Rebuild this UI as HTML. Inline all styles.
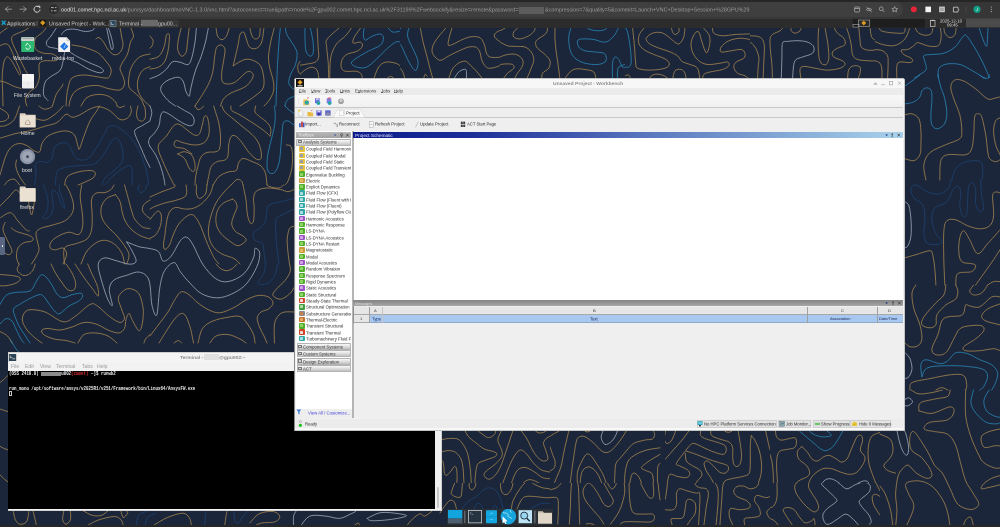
<!DOCTYPE html>
<html><head><meta charset="utf-8">
<style>
*{margin:0;padding:0;box-sizing:border-box}
html,body{width:1000px;height:527px;overflow:hidden;background:#1c263a;font-family:"Liberation Sans",sans-serif}
.a{position:absolute}
.t{position:absolute;white-space:nowrap;line-height:1;will-change:transform}
.ic{position:absolute}
u{text-decoration-thickness:0.35px;text-underline-offset:0.3px}
</style></head><body>
<!-- ============ browser chrome ============ -->
<div class="a" style="left:0;top:0;width:1000px;height:18px;background:#363636"></div>
<div class="a" style="left:0;top:0;width:1000px;height:1.5px;background:#262626"></div>
<div class="a" style="left:48px;top:2px;width:855px;height:14.5px;border-radius:7.5px;background:#3f3f3f"></div>
<svg class="a" style="left:0;top:0" width="1000" height="18">
  <g stroke="#9a9a9a" stroke-width="0.9" fill="none" stroke-linecap="round">
    <path d="M5.5 9.2h6M5.5 9.2l2.6-2.6M5.5 9.2l2.6 2.6"/>
    <path d="M20 9.2h6M26 9.2l-2.6-2.6M26 9.2l-2.6 2.6"/>
  </g>
  <g stroke="#d8d8d8" stroke-width="1" fill="none">
    <path d="M39.3 7.3A3 3 0 1 0 40 9.5"/>
    <path d="M38.2 6.2h1.6v1.6" stroke-linecap="round"/>
  </g>
  <circle cx="53.6" cy="9.2" r="5" fill="#2c2c2c"/>
  <g stroke="#d0d0d0" stroke-width="0.8">
    <path d="M51 7.6h2.8M55 7.6h1.5M51 10.8h1.5M53.8 10.8h2.8"/>
  </g>
  <!-- right icons -->
  <g stroke="#b4b4b4" stroke-width="0.7" fill="none">
    <rect x="854.6" y="7" width="5" height="5" rx="0.7"/>
    <path d="M854.6 8.5h5"/>
    <path d="M866.3 9.5c1.2-1.6 3.8-1.6 5.4 0c-1.6 1.6-4.2 1.6-5.4 0z M866.5 7.2l5.2 4.8"/>
    <circle cx="881.2" cy="8.8" r="1.9"/><path d="M882.6 10.2l1.9 1.9"/>
    <path d="M894.7 6.6l0.85 1.8 1.95 0.2-1.45 1.3 0.45 1.95-1.8-1.05-1.8 1.05 0.45-1.95-1.45-1.3 1.95-0.2z"/>
  </g>
  <path d="M912.6 6.4h2.4l1.7 1.7v2.4l-1.7 1.7h-2.4l-1.7-1.7v-2.4z" fill="#e4253a"/>
  <rect x="925.4" y="6.6" width="5.6" height="5.6" fill="#f4f4f4"/>
  <rect x="939.2" y="6.6" width="5.6" height="5.6" fill="#d4d4d4"/><rect x="940.2" y="7.6" width="3.6" height="3.6" fill="#a0a0a0"/>
  <path d="M953.4 7.2h4.6v1.6a0.8 0.8 0 0 1 0 1.6v1.6h-4.6z" fill="none" stroke="#cfcfcf" stroke-width="0.8"/>
  <rect x="965.8" y="5.6" width="0.5" height="7.5" fill="#555"/>
  <circle cx="977" cy="9.3" r="3.6" fill="#0f9b81"/>
  <path d="M977.6 7.6v2.4a0.9 0.9 0 0 1-1.7 0.3" stroke="#fff" stroke-width="0.55" fill="none"/>
  <g fill="#cfcfcf"><circle cx="991.3" cy="7" r="0.55"/><circle cx="991.3" cy="9.3" r="0.55"/><circle cx="991.3" cy="11.6" r="0.55"/></g>
</svg>
<div class="t" style="left:60.8px;top:7.2px;font-size:10.96px;color:#9c9c9c;transform:scale(0.5);transform-origin:0 0"><span style="color:#e6e6e6">ood01.comet.hpc.ncl.ac.uk</span>/pun/sys/dashboard/noVNC-1.3.0/vnc.html?autoconnect=true&amp;path=rnode%2Fgpu002.comet.hpc.ncl.ac.uk%2F31199%2Fwebsockify&amp;resize=remote&amp;password=</div>
<div class="a" style="left:518.8px;top:6.5px;width:25.7px;height:7px;background:#5c5c5c;filter:blur(0.6px)"></div>
<div class="t" style="left:544.5px;top:7.2px;font-size:10.84px;color:#9c9c9c;transform:scale(0.5);transform-origin:0 0">&amp;compression=7&amp;quality=5&amp;commit=Launch+VNC+Desktop+Session+%28GPU%29</div>

<!-- ============ XFCE panel ============ -->
<div class="a" style="left:0;top:18px;width:1000px;height:10px;background:#2c2c2c"></div>
<div class="a" style="left:0;top:17.5px;width:1000px;height:0.8px;background:#3a3a3a"></div>
<svg class="a" style="left:0;top:18px" width="1000" height="10" viewBox="0 18 1000 10">
  <g stroke="#1aa3d8" stroke-width="1.4"><path d="M1.8 20.6l3.8 4.2M5.6 20.6l-3.8 4.2"/></g>
  <rect x="36.6" y="21" width="0.7" height="4.5" fill="#777"/>
  <rect x="108.5" y="19.4" width="70.5" height="7.8" rx="1.5" fill="#363636"/>
  <rect x="39.5" y="19.6" width="6.5" height="6.6" fill="#1a1a1a"/>
  <path d="M42.7 20.3l2.6 2.5-2.6 2.6-2.6-2.6z" fill="#d89a20"/>
  <rect x="110" y="20.5" width="6" height="6" fill="#2f4a5e" stroke="#8aa0b0" stroke-width="0.5"/>
  <path d="M111.3 22v2.6h2.5" stroke="#e0e0e0" stroke-width="0.6" fill="none"/>
  <rect x="141" y="19.8" width="17" height="6.5" fill="#6a6a6a" filter="url(#bl)"/>
  <rect x="852.8" y="18.8" width="72" height="8.8" fill="#1e1e1e"/>
  <rect x="858.3" y="20" width="11.5" height="6.4" fill="#2a2a2a" stroke="#c8c8c8" stroke-width="0.5"/>
  <path d="M863.8 20.4l2.4 2.6-2.4 2.6-2.4-2.6z" fill="#d89a20"/>
  <rect x="853" y="24.5" width="6" height="2.6" fill="none" stroke="#c0c0c0" stroke-width="0.5"/>
  <rect x="930.5" y="20.5" width="4.5" height="6" fill="none" stroke="#d0d0d0" stroke-width="0.7"/>
  <rect x="931.8" y="19.8" width="2" height="1.2" fill="#d0d0d0"/>
  <rect x="966" y="18.6" width="34" height="8.6" fill="#4c4c4c" filter="url(#bl)"/>
  <defs><filter id="bl"><feGaussianBlur stdDeviation="0.7"/></filter></defs>
</svg>
<div class="t" style="left:7.3px;top:20.6px;font-size:10.60px;color:#d8d8d8;transform:scale(0.5);transform-origin:0 0">Applications</div>
<div class="t" style="left:48.5px;top:20.6px;font-size:10.60px;color:#d0d0d0;transform:scale(0.5);transform-origin:0 0">Unsaved Project - Work...</div>
<div class="t" style="left:119px;top:20.6px;font-size:10.60px;color:#d0d0d0;transform:scale(0.5);transform-origin:0 0">Terminal -</div>
<div class="t" style="left:158px;top:20.6px;font-size:10.60px;color:#d0d0d0;transform:scale(0.5);transform-origin:0 0">gpu00...</div>
<div class="t" style="left:940px;top:19.4px;font-size:8.60px;color:#e0e0e0;transform:scale(0.5);transform-origin:0 0">2025-12-10</div>
<div class="t" style="left:946.5px;top:23.2px;font-size:8.60px;color:#e0e0e0;transform:scale(0.5);transform-origin:0 0">09:45</div>

<!-- ============ wallpaper ============ -->
<svg class="a" id="wall" style="left:0;top:28px" width="1000" height="499" viewBox="0 28 1000 499"><defs><clipPath id="wc0"><rect x="430.0" y="428.0" width="120.0" height="55.0"/></clipPath><clipPath id="wc1"><rect x="550.0" y="428.0" width="115.0" height="55.0"/></clipPath><clipPath id="wc2"><rect x="430.0" y="483.0" width="120.0" height="44.0"/></clipPath><clipPath id="wc3"><rect x="550.0" y="483.0" width="115.0" height="44.0"/></clipPath><clipPath id="wc4"><rect x="665.0" y="428.0" width="105.0" height="55.0"/></clipPath><clipPath id="wc5"><rect x="770.0" y="428.0" width="110.0" height="55.0"/></clipPath><clipPath id="wc6"><rect x="665.0" y="483.0" width="105.0" height="44.0"/></clipPath><clipPath id="wc7"><rect x="770.0" y="483.0" width="110.0" height="44.0"/></clipPath><clipPath id="wc8"><rect x="300.0" y="27.0" width="100.0" height="53.0"/></clipPath><clipPath id="wc9"><rect x="400.0" y="27.0" width="100.0" height="53.0"/></clipPath><clipPath id="wc10"><rect x="500.0" y="27.0" width="125.0" height="53.0"/></clipPath><clipPath id="wc11"><rect x="625.0" y="27.0" width="125.0" height="53.0"/></clipPath><clipPath id="wc12"><rect x="750.0" y="27.0" width="125.0" height="53.0"/></clipPath><clipPath id="wc13"><rect x="875.0" y="27.0" width="125.0" height="51.0"/></clipPath></defs><g fill="none" stroke-width="0.75" stroke-linecap="round" stroke-linejoin="round"><path d="M0.0 33.3C0.6 32.8 2.2 31.3 3.7 30.3C5.2 29.2 8.1 27.5 9.0 27.0M30.0 27.0C29.0 27.6 26.5 29.5 24.0 30.7C21.5 32.0 17.0 33.4 15.0 34.5C12.9 35.6 12.1 36.0 11.7 37.5C11.3 39.0 11.8 40.9 12.7 43.5C13.7 46.1 15.7 50.0 17.2 53.2C18.7 56.5 20.4 60.1 21.7 63.0C23.1 65.9 24.5 68.6 25.5 70.5C26.5 72.4 27.4 73.6 27.7 74.2M0.0 45.7C0.9 45.4 3.7 43.8 5.2 43.8C6.7 43.8 7.7 44.2 9.0 45.7C10.2 47.3 11.5 50.5 12.7 53.2C14.0 56.0 15.4 59.6 16.5 62.2C17.6 64.9 18.7 67.0 19.5 69.0C20.2 71.0 20.7 73.4 21.0 74.2M3.0 106.0C2.9 103.9 2.8 97.9 2.7 93.0C2.6 88.1 2.1 81.5 2.2 76.5C2.4 71.5 3.0 66.2 3.7 63.0C4.5 59.7 5.6 57.6 6.7 57.0C7.9 56.4 9.1 57.6 10.5 59.2C11.9 60.9 13.5 64.1 15.0 66.7C16.5 69.4 18.7 73.6 19.5 75.0M0.0 81.0C1.0 81.2 3.7 81.6 6.0 82.5C8.2 83.4 11.0 85.2 13.5 86.2C16.0 87.2 19.7 88.1 21.0 88.5M46.5 27.0C45.9 27.9 44.5 30.5 42.7 32.2C41.0 34.0 37.4 35.6 36.0 37.5C34.6 39.4 34.5 41.5 34.5 43.5C34.5 45.5 34.5 47.9 36.0 49.5C37.5 51.1 40.7 52.5 43.5 53.2C46.2 54.0 50.1 53.2 52.5 54.0C54.9 54.7 57.2 56.6 57.7 57.7C58.2 58.9 57.6 60.2 55.5 60.7C53.4 61.2 47.6 60.4 45.0 60.7C42.4 61.1 40.7 61.4 39.7 63.0C38.7 64.6 39.1 68.0 39.0 70.5C38.9 73.0 39.8 75.2 39.3 78.0C38.8 80.7 37.5 84.7 36.0 87.0C34.4 89.2 31.7 89.5 30.0 91.5C28.2 93.5 26.0 96.6 25.5 99.0C25.0 101.4 26.7 104.9 27.0 106.0M72.0 45.0C74.0 45.4 79.7 46.0 84.0 47.2C88.2 48.5 94.0 50.4 97.5 52.5C101.0 54.6 102.7 57.2 105.0 60.0C107.2 62.7 110.2 66.2 111.0 69.0C111.7 71.7 110.5 75.0 109.5 76.5C108.5 78.0 109.2 78.2 105.0 78.0C100.7 77.7 89.5 75.0 84.0 75.0C78.5 75.0 74.6 76.0 72.0 78.0C69.4 80.0 69.1 84.0 68.2 87.0C67.4 90.0 67.1 92.8 66.7 96.0C66.4 99.2 66.1 104.4 66.0 106.0M96.0 39.0C96.5 38.7 97.7 37.0 99.0 37.5C100.2 38.0 102.0 40.0 103.5 42.0C105.0 44.0 106.2 47.4 108.0 49.5C109.7 51.6 112.0 54.2 114.0 54.7C116.0 55.2 118.5 54.1 120.0 52.5C121.5 50.9 122.7 47.7 123.0 45.0C123.2 42.2 122.0 39.0 121.5 36.0C121.0 33.0 120.2 28.5 120.0 27.0M130.5 27.0C131.0 28.5 133.5 33.5 133.5 36.0C133.5 38.5 131.5 39.0 130.5 42.0C129.5 45.0 128.9 50.5 127.5 54.0C126.1 57.5 123.5 60.5 122.2 63.0C121.0 65.5 119.9 66.7 120.0 69.0C120.1 71.2 122.2 74.0 123.0 76.5C123.7 79.0 125.0 81.7 124.5 84.0C124.0 86.2 122.7 89.2 120.0 90.0C117.2 90.7 111.7 89.2 108.0 88.5C104.2 87.7 101.5 85.7 97.5 85.5C93.5 85.2 87.7 86.0 84.0 87.0C80.2 88.0 77.2 89.5 75.0 91.5C72.7 93.5 71.5 96.6 70.5 99.0C69.5 101.4 69.2 104.9 69.0 106.0M150.0 54.0C148.2 54.5 142.5 55.0 139.5 57.0C136.5 59.0 133.7 62.7 132.0 66.0C130.2 69.2 129.5 73.0 129.0 76.5C128.5 80.0 128.0 84.2 129.0 87.0C130.0 89.7 133.0 91.0 135.0 93.0C137.0 95.0 139.5 96.8 141.0 99.0C142.5 101.2 143.5 104.9 144.0 106.0M150.0 66.7C148.7 67.4 144.5 68.4 142.5 70.5C140.5 72.6 138.7 76.2 138.0 79.5C137.2 82.7 137.2 86.7 138.0 90.0C138.7 93.2 140.5 96.3 142.5 99.0C144.5 101.7 148.7 104.9 150.0 106.0M52.5 106.0C53.1 104.1 54.7 97.7 56.2 94.5C57.7 91.3 60.4 88.7 61.5 87.0C62.6 85.2 62.7 84.5 63.0 84.0M81.0 106.0C82.0 104.6 84.2 99.4 87.0 97.5C89.7 95.6 94.0 94.7 97.5 94.5C101.0 94.2 105.0 94.7 108.0 96.0C111.0 97.2 114.0 100.3 115.5 102.0C117.0 103.7 116.7 105.4 117.0 106.0M150.0 36.0C150.5 36.7 152.6 38.9 153.0 40.5C153.4 42.1 152.7 44.5 152.2 45.7C151.7 47.0 150.4 47.6 150.0 48.0M150.0 59.2C151.5 58.7 156.6 58.4 159.0 56.2C161.4 54.1 163.0 49.9 164.2 46.5C165.4 43.1 165.6 38.1 166.2 36.0C166.8 33.9 167.1 33.7 167.7 33.7C168.2 33.7 169.4 33.1 169.5 36.0C169.5 38.9 168.9 46.6 168.0 51.0C167.1 55.4 166.0 59.5 164.2 62.2C162.5 65.0 159.9 66.4 157.5 67.5C155.1 68.6 151.2 68.7 150.0 69.0M181.5 27.0C181.0 29.0 179.1 35.2 178.5 39.0C177.9 42.7 177.2 46.6 177.7 49.5C178.2 52.4 180.1 55.7 181.5 56.2C182.9 56.7 185.0 54.9 186.0 52.5C187.0 50.1 186.9 46.2 187.5 42.0C188.0 37.7 189.0 29.5 189.3 27.0M216.0 27.0C216.2 28.5 216.5 33.9 217.5 36.0C218.5 38.1 220.5 39.7 222.0 39.7C223.5 39.7 225.2 38.1 226.5 36.0C227.7 33.9 229.0 28.5 229.5 27.0M195.0 106.0C196.2 104.1 200.1 98.4 202.5 94.5C204.9 90.6 207.5 86.5 209.2 82.5C211.0 78.5 212.1 75.0 213.0 70.5C213.9 66.0 214.2 59.4 214.8 55.5C215.4 51.6 215.7 49.0 216.7 47.2C217.8 45.5 219.9 44.6 221.2 45.0C222.6 45.4 224.6 46.7 225.0 49.5C225.4 52.2 224.0 57.5 223.5 61.5C222.9 65.5 221.7 69.9 221.7 73.5C221.6 77.0 221.1 81.2 223.2 82.8C225.2 84.3 229.9 84.6 234.0 82.8C238.0 80.9 244.3 72.9 247.5 71.7C250.7 70.5 253.4 73.3 253.2 75.7C252.9 78.2 249.7 83.4 246.0 86.2C242.3 89.1 234.7 90.9 231.0 93.0C227.2 95.1 225.2 96.8 223.5 99.0C221.7 101.2 221.0 104.9 220.5 106.0M233.2 65.7C234.0 62.5 236.6 51.7 237.7 46.5C238.9 41.3 239.0 36.9 240.0 34.5C241.0 32.1 242.7 31.5 243.7 32.2C244.8 33.0 245.3 36.5 246.3 39.0C247.3 41.5 248.0 45.7 249.7 47.2C251.4 48.8 254.5 49.2 256.5 48.3C258.5 47.4 260.5 45.5 261.7 42.0C263.0 38.4 263.6 29.5 264.0 27.0M249.7 27.0C250.1 28.5 251.0 34.0 252.0 36.0C253.0 38.0 254.5 39.0 255.7 39.0C257.0 39.0 258.7 38.0 259.5 36.0C260.2 34.0 260.1 28.5 260.2 27.0M233.2 65.7C235.4 64.6 241.9 59.7 246.0 59.2C250.1 58.8 255.2 60.9 258.0 63.0C260.8 65.1 261.9 68.0 262.8 72.0C263.7 76.0 264.8 83.0 263.5 87.0C262.2 91.0 258.9 92.8 255.0 96.0C251.1 99.2 242.5 104.4 240.0 106.0M274.5 27.0C273.9 29.5 271.7 37.0 270.7 42.0C269.7 47.0 268.6 52.5 268.5 57.0C268.4 61.5 269.2 65.2 270.0 69.0C270.7 72.7 272.4 76.0 273.0 79.5C273.6 83.0 274.2 86.7 273.7 90.0C273.2 93.2 271.6 96.3 270.0 99.0C268.4 101.7 265.0 104.9 264.0 106.0M300.0 61.5C299.6 62.2 298.0 64.2 297.7 66.0C297.5 67.7 298.1 70.7 298.5 72.0C298.9 73.2 299.7 73.2 300.0 73.5M0.0 108.2C1.1 109.0 5.3 111.2 6.7 112.7C8.2 114.2 8.9 115.9 8.7 117.2C8.4 118.6 6.7 119.9 5.2 120.7C3.8 121.4 0.9 121.6 0.0 121.7M19.5 106.0C18.6 108.2 16.5 116.2 14.2 119.5C12.0 122.7 8.4 124.4 6.0 125.5C3.6 126.6 1.0 126.1 0.0 126.2M39.0 106.0C39.7 106.5 41.7 108.6 43.5 109.0C45.2 109.4 48.0 108.7 49.5 108.2C51.0 107.7 52.0 106.4 52.5 106.0M36.0 118.7C37.5 119.0 42.0 120.9 45.0 120.2C48.0 119.6 51.5 116.7 54.0 115.0C56.5 113.2 58.5 111.2 60.0 109.7C61.5 108.2 62.5 106.6 63.0 106.0M0.0 138.2C2.5 137.5 10.0 135.0 15.0 133.7C20.0 132.5 25.0 132.0 30.0 130.7C35.0 129.5 40.5 127.6 45.0 126.2C49.5 124.9 53.5 124.5 57.0 122.5C60.5 120.5 63.5 115.1 66.0 114.2C68.5 113.4 69.7 117.1 72.0 117.2C74.2 117.4 76.5 116.4 79.5 115.0C82.5 113.6 86.7 110.4 90.0 109.0C93.2 107.6 95.7 106.5 99.0 106.7C102.2 107.0 106.0 108.4 109.5 110.5C113.0 112.6 117.0 118.2 120.0 119.5C123.0 120.7 125.6 119.2 127.5 118.0C129.4 116.7 130.7 114.0 131.2 112.0C131.7 110.0 130.6 107.0 130.5 106.0M0.0 175.0C1.0 171.7 4.0 160.2 6.0 155.5C8.0 150.7 9.7 148.5 12.0 146.5C14.2 144.5 17.0 143.6 19.5 143.5C22.0 143.4 24.5 144.5 27.0 145.7C29.5 147.0 32.4 150.0 34.5 151.0C36.6 152.0 38.5 153.0 39.7 151.7C41.0 150.5 40.6 146.1 42.0 143.5C43.4 140.9 45.0 138.0 48.0 136.0C51.0 134.0 56.5 132.2 60.0 131.5C63.5 130.7 66.5 130.7 69.0 131.5C71.5 132.2 73.5 133.5 75.0 136.0C76.5 138.5 77.2 144.4 78.0 146.5C78.7 148.6 78.5 150.5 79.5 148.7C80.5 147.0 82.2 140.6 84.0 136.0C85.7 131.4 88.0 125.0 90.0 121.0C92.0 117.0 94.4 114.5 96.0 112.0C97.6 109.5 99.1 107.0 99.7 106.0M16.5 160.0C16.4 161.0 15.5 163.7 15.7 166.0C16.0 168.2 16.9 171.0 18.0 173.5C19.1 176.0 21.2 179.1 22.5 181.0C23.7 182.9 25.0 184.4 25.5 185.0M4.5 185.0C5.2 184.2 7.2 181.2 9.0 180.2C10.7 179.3 13.2 178.7 15.0 179.5C16.7 180.3 18.7 184.1 19.5 185.0M64.5 185.0C65.0 183.6 65.2 178.7 67.5 176.5C69.7 174.3 74.2 173.0 78.0 172.0C81.7 171.0 87.1 170.4 90.0 170.5C92.9 170.6 94.7 171.5 95.2 172.7C95.7 174.0 94.9 176.4 93.0 178.0C91.1 179.6 86.5 181.3 84.0 182.5C81.5 183.7 79.0 184.6 78.0 185.0M117.0 106.0C117.5 106.2 118.7 107.5 120.0 107.5C121.2 107.5 123.7 106.2 124.5 106.0M138.0 106.0C137.7 107.2 136.5 111.2 136.5 113.5C136.5 115.7 137.0 118.2 138.0 119.5C139.0 120.7 141.2 121.5 142.5 121.0C143.7 120.5 145.1 119.0 145.5 116.5C145.9 114.0 144.9 107.7 144.7 106.0M195.0 106.0C195.5 106.6 196.7 109.5 198.0 109.7C199.2 110.0 201.6 108.1 202.5 107.5C203.4 106.9 203.1 106.2 203.2 106.0M213.7 106.0C214.1 107.2 215.1 110.5 216.0 113.5C216.9 116.5 218.2 120.2 219.0 124.0C219.7 127.7 220.4 132.0 220.5 136.0C220.6 140.0 220.5 145.4 219.7 148.0C219.0 150.6 218.1 151.0 216.0 151.7C213.9 152.5 209.5 151.6 207.0 152.5C204.5 153.4 202.5 154.7 201.0 157.0C199.5 159.2 198.9 162.7 198.0 166.0C197.1 169.2 196.2 173.3 195.7 176.5C195.2 179.7 195.1 183.6 195.0 185.0M174.0 185.0C172.2 181.4 166.1 169.4 163.5 163.0C160.9 156.6 157.7 151.0 158.2 146.5C158.7 142.0 163.9 139.5 166.5 136.0C169.1 132.5 171.7 127.4 174.0 125.5C176.2 123.6 177.5 123.7 180.0 124.7C182.5 125.7 186.5 129.7 189.0 131.5C191.5 133.2 193.2 134.9 195.0 135.2C196.7 135.6 198.2 135.6 199.5 133.7C200.7 131.9 201.7 126.9 202.5 124.0C203.3 121.1 203.5 117.6 204.3 116.5C205.1 115.4 206.5 115.5 207.3 117.2C208.1 119.0 209.0 123.9 209.2 127.0C209.4 130.1 209.4 133.4 208.5 136.0C207.6 138.6 206.2 141.2 204.0 142.7C201.7 144.2 198.5 145.0 195.0 145.0C191.5 145.0 186.1 143.5 183.0 142.7C179.9 142.0 177.7 140.2 176.2 140.5C174.7 140.7 174.0 143.1 174.0 144.2C174.0 145.4 174.5 146.5 176.2 147.2C178.0 148.0 181.9 147.6 184.5 148.7C187.1 149.9 190.7 153.1 192.0 154.0M177.7 154.0C178.9 153.6 182.1 151.5 184.5 151.7C186.9 152.0 190.2 153.4 192.0 155.5C193.7 157.6 194.6 161.9 195.0 164.5C195.4 167.1 195.1 170.5 194.2 171.2C193.4 172.0 191.4 171.1 189.7 169.0C188.1 166.9 186.5 161.0 184.5 158.5C182.5 156.0 178.9 154.7 177.7 154.0M222.0 106.0C222.5 107.0 223.0 109.7 225.0 112.0C227.0 114.2 231.0 117.0 234.0 119.5C237.0 122.0 240.0 124.5 243.0 127.0C246.0 129.5 249.5 132.0 252.0 134.5C254.5 137.0 256.5 139.2 258.0 142.0C259.5 144.7 260.5 148.2 261.0 151.0C261.5 153.7 261.7 157.1 261.0 158.5C260.2 159.9 258.5 160.2 256.5 159.2C254.5 158.2 251.5 155.4 249.0 152.5C246.5 149.6 243.7 144.7 241.5 142.0C239.2 139.2 237.2 136.9 235.5 136.0C233.7 135.1 232.1 135.2 231.0 136.7C229.9 138.2 229.2 141.9 228.7 145.0C228.2 148.1 228.6 153.0 228.0 155.5C227.4 158.0 226.7 159.0 225.0 160.0C223.2 161.0 219.7 160.5 217.5 161.5C215.2 162.5 212.9 164.0 211.5 166.0C210.1 168.0 210.0 170.3 209.2 173.5C208.5 176.7 207.4 183.1 207.0 185.0M231.0 106.0C231.1 106.7 230.2 109.0 231.7 110.5C233.2 112.0 236.6 113.0 240.0 115.0C243.4 117.0 248.5 120.2 252.0 122.5C255.5 124.7 258.2 126.5 261.0 128.5C263.7 130.5 267.0 133.2 268.5 134.5C270.0 135.7 269.6 137.0 270.0 136.0C270.4 135.0 271.2 130.7 270.7 128.5C270.2 126.2 268.9 124.5 267.0 122.5C265.1 120.5 261.5 118.2 259.5 116.5C257.5 114.7 255.6 113.7 255.0 112.0C254.4 110.2 255.6 107.0 255.7 106.0M213.0 185.0C214.0 183.6 216.5 178.7 219.0 176.5C221.5 174.3 225.1 173.0 228.0 172.0C230.9 171.0 234.5 172.0 236.2 170.5C238.0 169.0 237.4 165.0 238.5 163.0C239.6 161.0 240.7 158.7 243.0 158.5C245.2 158.2 249.0 160.2 252.0 161.5C255.0 162.7 258.7 164.0 261.0 166.0C263.2 168.0 264.5 170.3 265.5 173.5C266.5 176.7 266.7 183.1 267.0 185.0M231.0 185.0C232.0 184.1 235.2 180.2 237.0 179.5C238.7 178.8 240.5 180.1 241.5 181.0C242.5 181.9 242.7 184.4 243.0 185.0M286.5 145.0C287.2 145.2 290.0 144.7 291.0 146.5C292.0 148.2 292.4 151.7 292.5 155.5C292.6 159.2 292.5 164.7 291.7 169.0C291.0 173.2 289.1 178.3 288.0 181.0C286.9 183.7 285.5 184.4 285.0 185.0M0.0 206.0C1.5 204.5 6.5 199.6 9.0 197.0C11.5 194.4 13.5 191.2 15.0 190.2C16.5 189.2 17.1 190.4 18.0 191.0C18.9 191.6 19.9 193.5 20.2 194.0M28.5 201.5C29.0 203.7 30.5 215.0 31.5 215.0C32.5 215.0 34.0 203.7 34.5 201.5M0.0 218.0C1.7 217.1 7.5 212.2 10.5 212.7C13.5 213.2 15.4 218.1 18.0 221.0C20.6 223.9 24.4 228.4 26.2 230.0C28.1 231.6 28.7 230.6 29.2 230.7M5.2 222.5C4.9 223.7 2.5 226.7 3.0 230.0C3.5 233.2 6.7 238.5 8.2 242.0C9.7 245.5 11.9 248.9 12.0 251.0C12.1 253.1 10.1 254.4 9.0 254.7C7.9 255.1 5.9 253.5 5.2 253.2M11.2 227.7C12.1 228.4 13.6 230.2 16.5 231.5C19.4 232.7 25.7 234.1 28.5 235.2C31.2 236.4 32.5 237.2 33.0 238.2C33.5 239.2 33.0 240.5 31.5 241.2C30.0 242.0 26.2 241.6 24.0 242.7C21.7 243.9 19.2 245.6 18.0 248.0C16.7 250.4 16.4 254.3 16.5 257.0C16.6 259.7 18.4 262.9 18.7 264.0M66.0 185.0C66.7 186.5 69.2 190.7 70.5 194.0C71.7 197.2 73.2 201.2 73.5 204.5C73.7 207.7 73.5 210.7 72.0 213.5C70.5 216.2 68.0 219.0 64.5 221.0C61.0 223.0 55.0 224.2 51.0 225.5C47.0 226.7 43.0 227.2 40.5 228.5C38.0 229.7 36.5 230.7 36.0 233.0C35.5 235.2 37.0 239.2 37.5 242.0C38.0 244.7 39.2 247.0 39.0 249.5C38.7 252.0 37.2 254.6 36.0 257.0C34.7 259.4 32.2 262.9 31.5 264.0M81.7 185.0C81.5 187.0 80.1 192.0 80.2 197.0C80.4 202.0 82.1 210.0 82.5 215.0C82.9 220.0 83.1 223.7 82.5 227.0C81.9 230.2 81.0 233.6 78.7 234.5C76.5 235.4 72.4 232.0 69.0 232.2C65.6 232.5 61.5 234.4 58.5 236.0C55.5 237.6 52.4 240.0 51.0 242.0C49.6 244.0 49.5 246.7 50.2 248.0C51.0 249.3 53.4 249.8 55.5 249.8C57.6 249.8 61.1 247.3 63.0 248.0C64.9 248.7 66.7 251.3 66.7 254.0C66.7 256.7 63.6 262.4 63.0 264.0M114.0 185.0C113.5 185.7 112.5 188.2 111.0 189.5C109.5 190.7 107.5 191.9 105.0 192.5C102.5 193.1 98.2 192.0 96.0 193.2C93.7 194.5 92.1 196.4 91.5 200.0C90.9 203.6 92.2 210.0 92.2 215.0C92.2 220.0 92.4 226.0 91.5 230.0C90.6 234.0 89.5 236.7 87.0 239.0C84.5 241.2 80.0 242.2 76.5 243.5C73.0 244.7 68.1 245.0 66.0 246.5C63.9 248.0 64.0 249.6 63.7 252.5C63.5 255.4 64.4 262.1 64.5 264.0M124.5 185.0C125.0 186.7 126.2 191.0 127.5 195.5C128.7 200.0 130.7 208.0 132.0 212.0C133.2 216.0 133.2 217.0 135.0 219.5C136.7 222.0 140.0 225.5 142.5 227.0C145.0 228.5 148.7 228.2 150.0 228.5M150.0 200.0C149.0 200.7 145.2 202.7 144.0 204.5C142.7 206.2 142.0 208.5 142.5 210.5C143.0 212.5 145.7 215.2 147.0 216.5C148.2 217.7 149.5 217.7 150.0 218.0M115.5 194.7C114.0 195.4 108.9 196.4 106.5 198.5C104.1 200.6 102.0 204.2 101.2 207.5C100.5 210.7 100.9 214.7 102.0 218.0C103.1 221.2 105.5 224.0 108.0 227.0C110.5 230.0 114.0 232.5 117.0 236.0C120.0 239.5 124.0 244.7 126.0 248.0C128.0 251.2 128.9 252.8 129.0 255.5C129.1 258.2 127.1 262.6 126.7 264.0M115.5 194.7C116.2 195.9 118.9 198.6 120.0 201.5C121.1 204.4 121.4 208.7 122.2 212.0C123.1 215.2 123.6 218.0 125.2 221.0C126.9 224.0 129.4 227.5 132.0 230.0C134.6 232.5 138.0 234.5 141.0 236.0C144.0 237.5 148.5 238.5 150.0 239.0M81.0 264.0C82.0 261.9 84.2 254.7 87.0 251.0C89.7 247.3 94.2 243.7 97.5 242.0C100.7 240.2 103.5 240.0 106.5 240.5C109.5 241.0 112.9 242.7 115.5 245.0C118.1 247.2 120.7 250.8 122.2 254.0C123.7 257.2 124.1 262.4 124.5 264.0M150.0 197.0C152.0 196.1 158.0 193.4 162.0 191.7C166.0 190.1 171.9 188.4 174.0 187.2C176.1 186.1 174.6 185.4 174.7 185.0M186.0 185.0C186.1 186.2 187.0 190.5 186.7 192.5C186.5 194.5 186.1 195.7 184.5 197.0C182.9 198.2 180.2 199.0 177.0 200.0C173.7 201.0 168.5 202.0 165.0 203.0C161.5 204.0 158.5 205.0 156.0 206.0C153.5 207.0 151.0 208.5 150.0 209.0M196.5 185.0C196.5 186.5 196.0 191.7 196.5 194.0C197.0 196.2 198.0 198.5 199.5 198.5C201.0 198.5 204.2 196.2 205.5 194.0C206.7 191.7 206.7 186.5 207.0 185.0M213.0 185.0C212.5 186.5 211.7 191.0 210.0 194.0C208.2 197.0 205.2 200.6 202.5 203.0C199.7 205.4 196.5 207.2 193.5 208.2C190.5 209.2 187.5 209.1 184.5 209.0C181.5 208.9 178.0 207.0 175.5 207.5C173.0 208.0 171.0 209.5 169.5 212.0C168.0 214.5 167.2 218.7 166.5 222.5C165.7 226.2 165.5 230.7 165.0 234.5C164.5 238.2 163.5 242.5 163.5 245.0C163.5 247.5 164.0 249.5 165.0 249.5C166.0 249.5 168.0 247.7 169.5 245.0C171.0 242.2 172.2 236.7 174.0 233.0C175.7 229.2 177.5 225.5 180.0 222.5C182.5 219.5 186.5 216.0 189.0 215.0C191.5 214.0 193.0 214.5 195.0 216.5C197.0 218.5 199.2 223.2 201.0 227.0C202.7 230.7 204.0 235.2 205.5 239.0C207.0 242.7 208.5 246.2 210.0 249.5C211.5 252.7 213.0 256.1 214.5 258.5C216.0 260.9 218.2 263.1 219.0 264.0M150.0 219.5C151.2 218.1 155.6 212.0 157.5 211.2C159.4 210.5 160.7 212.6 161.2 215.0C161.7 217.4 161.4 222.2 160.5 225.5C159.6 228.7 157.7 232.4 156.0 234.5C154.2 236.6 151.0 237.6 150.0 238.2M231.0 185.0C230.0 186.0 227.5 188.0 225.0 191.0C222.5 194.0 218.5 198.2 216.0 203.0C213.5 207.7 211.2 214.2 210.0 219.5C208.7 224.7 208.0 230.0 208.5 234.5C209.0 239.0 210.7 243.2 213.0 246.5C215.2 249.7 218.5 252.0 222.0 254.0C225.5 256.0 231.0 256.8 234.0 258.5C237.0 260.2 239.0 263.1 240.0 264.0M232.5 199.2C231.0 199.9 226.0 201.1 223.5 203.0C221.0 204.9 218.7 207.2 217.5 210.5C216.2 213.7 215.5 218.7 216.0 222.5C216.5 226.2 218.0 229.7 220.5 233.0C223.0 236.2 228.0 239.9 231.0 242.0C234.0 244.1 236.0 246.0 238.5 245.7C241.0 245.5 245.2 242.1 246.0 240.5C246.7 238.9 244.7 237.5 243.0 236.0C241.2 234.5 237.4 233.5 235.5 231.5C233.6 229.5 232.0 226.7 231.7 224.0C231.5 221.2 233.1 217.7 234.0 215.0C234.9 212.2 236.7 209.7 237.0 207.5C237.2 205.2 236.2 202.9 235.5 201.5C234.7 200.1 233.0 199.6 232.5 199.2M243.0 185.0C243.5 187.5 245.2 195.0 246.0 200.0C246.7 205.0 246.7 211.1 247.5 215.0C248.2 218.9 249.5 222.2 250.5 223.2C251.5 224.2 252.9 223.6 253.5 221.0C254.1 218.4 254.2 211.2 254.2 207.5C254.2 203.7 253.1 201.2 253.5 198.5C253.9 195.7 254.2 192.7 256.5 191.0C258.7 189.2 263.0 188.2 267.0 188.0C271.0 187.7 277.0 188.9 280.5 189.5C284.0 190.1 285.7 191.7 288.0 191.7C290.2 191.7 293.0 189.9 294.0 189.5M267.0 185.0C267.7 185.4 269.5 186.7 271.5 187.2C273.5 187.7 277.0 188.4 279.0 188.0C281.0 187.6 282.7 185.5 283.5 185.0M294.0 226.2C293.2 226.6 290.6 226.4 289.5 228.5C288.4 230.6 287.5 235.0 287.2 239.0C287.0 243.0 287.6 248.3 288.0 252.5C288.4 256.7 289.2 262.1 289.5 264.0M19.5 264.0C19.1 265.0 16.7 268.1 17.2 270.0C17.7 271.9 20.6 274.5 22.5 275.2C24.4 276.0 26.7 275.4 28.5 274.5C30.2 273.6 31.9 271.7 33.0 270.0C34.1 268.2 34.9 265.0 35.2 264.0M0.0 274.5C1.5 274.6 6.0 274.9 9.0 275.2C12.0 275.6 16.1 276.0 18.0 276.7C19.9 277.5 20.7 278.6 20.2 279.7C19.7 280.9 17.4 282.5 15.0 283.5C12.6 284.5 8.5 285.4 6.0 285.7C3.5 286.1 1.0 285.7 0.0 285.7M51.0 264.0C51.7 265.5 53.7 270.0 55.5 273.0C57.2 276.0 59.5 279.2 61.5 282.0C63.5 284.7 65.5 288.1 67.5 289.5C69.5 290.9 72.1 291.2 73.5 290.2C74.9 289.2 76.0 286.4 75.7 283.5C75.5 280.6 73.6 276.2 72.0 273.0C70.4 269.7 67.0 265.5 66.0 264.0M75.0 264.0C76.5 266.2 81.0 273.2 84.0 277.5C87.0 281.7 90.6 286.4 93.0 289.5C95.4 292.6 97.5 296.7 98.2 296.2C99.0 295.7 98.6 290.4 97.5 286.5C96.4 282.6 93.1 276.7 91.5 273.0C89.9 269.2 88.4 265.5 87.7 264.0M42.0 343.0C40.7 342.1 37.0 339.7 34.5 337.5C32.0 335.3 29.0 332.7 27.0 330.0C25.0 327.2 23.0 323.7 22.5 321.0C22.0 318.2 22.7 315.4 24.0 313.5C25.2 311.6 26.5 310.0 30.0 309.7C33.5 309.5 39.5 310.0 45.0 312.0C50.5 314.0 58.0 321.0 63.0 321.7C68.0 322.5 70.5 319.4 75.0 316.5C79.5 313.6 86.2 306.2 90.0 304.5C93.7 302.7 94.2 304.0 97.5 306.0C100.7 308.0 105.7 313.7 109.5 316.5C113.2 319.2 117.5 322.2 120.0 322.5C122.5 322.7 124.2 320.2 124.5 318.0C124.7 315.7 122.5 312.5 121.5 309.0C120.5 305.5 117.5 300.4 118.5 297.0C119.5 293.6 124.2 289.5 127.5 288.7C130.7 288.0 135.5 289.9 138.0 292.5C140.5 295.1 141.6 300.5 142.5 304.5C143.4 308.5 143.5 312.5 143.2 316.5C143.0 320.5 141.9 326.2 141.0 328.5C140.1 330.7 139.5 331.5 138.0 330.0C136.5 328.5 133.5 322.2 132.0 319.5C130.5 316.7 130.0 313.5 129.0 313.5C128.0 313.5 126.7 317.0 126.0 319.5C125.2 322.0 125.7 326.2 124.5 328.5C123.2 330.7 121.2 332.7 118.5 333.0C115.7 333.2 111.7 331.5 108.0 330.0C104.2 328.5 100.0 325.2 96.0 324.0C92.0 322.7 88.0 322.0 84.0 322.5C80.0 323.0 76.0 325.7 72.0 327.0C68.0 328.2 64.0 329.7 60.0 330.0C56.0 330.2 51.0 328.5 48.0 328.5C45.0 328.5 42.7 329.0 42.0 330.0C41.2 331.0 41.5 333.0 43.5 334.5C45.5 336.0 50.2 338.0 54.0 339.0C57.7 340.0 62.5 339.8 66.0 340.5C69.5 341.2 73.5 342.6 75.0 343.0M78.0 343.0C79.0 341.6 81.0 336.2 84.0 334.5C87.0 332.8 92.0 332.7 96.0 333.0C100.0 333.2 104.5 334.3 108.0 336.0C111.5 337.7 115.5 341.9 117.0 343.0M0.0 331.5C1.2 332.2 5.5 334.1 7.5 336.0C9.5 337.9 11.2 341.9 12.0 343.0M150.0 334.5C149.2 335.2 146.5 337.6 145.5 339.0C144.5 340.4 144.2 342.4 144.0 343.0M216.0 264.0C216.7 264.7 218.7 267.4 220.5 268.5C222.2 269.6 224.5 270.7 226.5 270.7C228.5 270.7 230.7 269.6 232.5 268.5C234.2 267.4 236.2 264.7 237.0 264.0M150.0 336.0C151.5 334.0 156.0 328.0 159.0 324.0C162.0 320.0 165.2 316.2 168.0 312.0C170.7 307.7 173.2 301.9 175.5 298.5C177.7 295.1 179.2 292.4 181.5 291.7C183.7 291.1 186.2 292.9 189.0 294.7C191.7 296.6 194.5 300.4 198.0 303.0C201.5 305.6 206.2 308.9 210.0 310.5C213.7 312.1 216.5 313.2 220.5 312.7C224.5 312.2 229.7 309.6 234.0 307.5C238.2 305.4 242.0 302.0 246.0 300.0C250.0 298.0 254.2 296.0 258.0 295.5C261.7 295.0 266.0 295.7 268.5 297.0C271.0 298.2 273.0 301.0 273.0 303.0C273.0 305.0 270.5 307.5 268.5 309.0C266.5 310.5 262.9 310.5 261.0 312.0C259.1 313.5 257.5 315.5 257.2 318.0C257.0 320.5 258.4 324.0 259.5 327.0C260.6 330.0 262.7 333.3 264.0 336.0C265.2 338.7 266.5 341.9 267.0 343.0M159.0 343.0C160.5 340.6 165.2 332.7 168.0 328.5C170.7 324.3 173.2 320.5 175.5 318.0C177.7 315.5 179.7 313.7 181.5 313.5C183.2 313.2 184.5 314.0 186.0 316.5C187.5 319.0 189.2 324.1 190.5 328.5C191.7 332.9 193.0 340.6 193.5 343.0M198.0 343.0C198.7 340.6 200.0 332.2 202.5 328.5C205.0 324.8 208.7 322.9 213.0 321.0C217.2 319.1 223.5 318.0 228.0 317.2C232.5 316.5 236.7 315.4 240.0 316.5C243.2 317.6 245.2 321.0 247.5 324.0C249.7 327.0 252.2 331.3 253.5 334.5C254.7 337.7 254.7 341.6 255.0 343.0M210.0 343.0C211.0 341.9 213.0 337.4 216.0 336.0C219.0 334.6 224.0 334.0 228.0 334.5C232.0 335.0 237.0 337.6 240.0 339.0C243.0 340.4 245.0 342.4 246.0 343.0M174.0 343.0C174.7 342.6 177.2 340.5 178.5 340.5C179.7 340.5 181.0 342.6 181.5 343.0M289.5 264.0C289.6 265.2 291.0 268.7 290.2 271.5C289.5 274.2 287.4 277.5 285.0 280.5C282.6 283.5 278.0 287.0 276.0 289.5C274.0 292.0 272.2 293.9 273.0 295.5C273.7 297.1 277.7 299.5 280.5 299.2C283.2 299.0 287.1 296.1 289.5 294.0C291.9 291.9 293.9 287.7 294.7 286.5M274.5 343.0C274.5 339.9 273.7 328.7 274.5 324.0C275.2 319.3 277.2 317.0 279.0 315.0C280.7 313.0 282.4 312.5 285.0 312.0C287.6 311.5 293.1 312.0 294.7 312.0M905.0 114.8C906.1 114.7 909.6 113.2 912.0 113.8C914.3 114.5 917.4 116.0 918.9 118.8C920.4 121.6 920.6 126.5 920.9 130.8C921.2 135.1 921.1 140.7 920.9 144.7C920.8 148.7 921.1 152.0 919.9 154.7C918.8 157.3 916.4 160.0 913.9 160.7C911.5 161.3 906.5 159.0 905.0 158.7M925.9 180.0C925.6 177.4 923.2 169.2 923.9 164.6C924.6 160.1 926.2 156.0 929.9 152.7C933.5 149.4 940.8 147.0 945.8 144.7C950.8 142.4 957.1 141.1 959.8 138.7C962.4 136.4 961.8 134.8 961.8 130.8C961.8 126.8 961.1 120.2 959.8 114.8C958.4 109.5 955.3 103.6 953.8 98.9C952.3 94.3 950.6 90.1 950.8 87.0C951.0 83.8 952.6 81.0 954.8 80.0C956.9 79.0 960.3 79.5 963.7 81.0C967.2 82.5 971.7 86.0 975.7 88.9C979.7 91.9 984.3 97.4 987.6 98.9C991.0 100.4 993.6 98.2 995.6 97.9C997.7 97.6 999.3 97.1 1000.0 96.9M939.8 180.0C940.0 176.8 939.5 164.9 940.8 160.7C942.2 156.4 943.7 155.7 947.8 154.7C952.0 153.7 961.8 155.7 965.7 154.7C969.7 153.7 970.4 152.0 971.7 148.7C973.0 145.4 973.2 140.1 973.7 134.8C974.2 129.4 974.0 120.3 974.7 116.8C975.4 113.3 976.5 113.8 977.7 113.8C978.9 113.8 980.3 113.3 981.7 116.8C983.0 120.3 984.7 129.1 985.7 134.8C986.7 140.4 987.0 146.7 987.6 150.7C988.3 154.7 988.3 156.8 989.6 158.7C991.0 160.5 993.9 161.5 995.6 161.7C997.3 161.8 999.3 160.0 1000.0 159.7M1000.0 117.8C999.3 118.3 996.7 118.7 995.6 120.8C994.6 123.0 993.6 126.8 993.6 130.8C993.6 134.8 994.6 140.7 995.6 144.7C996.7 148.7 999.3 153.0 1000.0 154.7M905.0 257.7C906.8 257.2 911.8 255.9 915.9 254.7C920.1 253.5 927.1 250.6 929.9 250.7C932.7 250.9 932.0 252.5 932.9 255.7C933.7 258.9 934.4 264.8 934.9 269.6C935.4 274.5 935.7 282.4 935.9 285.0M944.8 285.0C944.7 280.8 944.0 268.5 943.8 259.7C943.7 250.8 943.3 238.3 943.8 231.8C944.3 225.3 944.8 222.8 946.8 220.8C948.8 218.8 952.3 219.0 955.8 219.8C959.3 220.7 963.7 224.3 967.7 225.8C971.7 227.3 976.0 228.8 979.7 228.8C983.3 228.8 987.3 228.0 989.6 225.8C992.0 223.7 993.1 220.8 993.6 215.9C994.1 210.9 992.3 199.9 992.6 195.9C993.0 192.0 994.4 192.5 995.6 192.0C996.8 191.5 999.3 192.8 1000.0 192.9M955.8 285.0C956.1 283.1 955.1 275.8 957.8 273.6C960.4 271.4 968.7 273.0 971.7 271.6C974.7 270.3 975.7 267.0 975.7 265.7C975.7 264.3 974.0 264.3 971.7 263.7C969.4 263.0 963.9 263.7 961.8 261.7C959.6 259.7 959.1 255.7 958.8 251.7C958.4 247.7 958.9 241.3 959.8 237.8C960.6 234.3 962.1 230.5 963.7 230.8C965.4 231.1 967.4 235.9 969.7 239.8C972.0 243.6 974.7 253.0 977.7 253.7C980.7 254.4 983.9 247.7 987.6 243.7C991.4 239.8 997.9 232.1 1000.0 229.8M975.7 285.0C977.0 283.1 980.7 277.8 983.7 273.6C986.7 269.4 990.9 263.7 993.6 259.7C996.3 255.7 998.9 251.4 1000.0 249.7M987.6 285.0C988.6 284.4 991.6 282.2 993.6 281.6C995.7 281.0 998.9 281.6 1000.0 281.6M915.9 285.0C915.3 286.3 912.3 289.0 912.0 293.0C911.6 297.0 912.6 303.6 913.9 308.9C915.3 314.2 918.6 319.9 919.9 324.8C921.2 329.8 922.2 335.3 921.9 338.8C921.6 342.3 919.9 344.4 917.9 345.8C915.9 347.1 912.1 347.3 910.0 346.8C907.8 346.3 905.8 343.4 905.0 342.8M945.8 285.0C945.5 286.7 945.5 292.0 943.8 295.0C942.2 297.9 939.2 299.3 935.9 302.9C932.5 306.6 926.2 313.2 923.9 316.9C921.6 320.5 920.9 323.0 921.9 324.8C922.9 326.7 927.6 327.8 929.9 327.8C932.2 327.8 934.7 327.0 935.9 324.8C937.0 322.7 935.2 318.2 936.9 314.9C938.5 311.6 942.7 307.6 945.8 304.9C949.0 302.3 953.8 301.3 955.8 298.9C957.8 296.6 957.8 293.3 957.8 291.0C957.8 288.7 956.1 286.0 955.8 285.0M973.7 285.0C973.0 286.0 969.7 289.3 969.7 291.0C969.7 292.6 971.7 294.6 973.7 295.0C975.7 295.3 979.3 294.6 981.7 293.0C984.0 291.3 986.7 286.3 987.6 285.0M1000.0 297.0C998.6 297.0 995.0 295.3 991.6 297.0C988.2 298.6 983.3 305.4 979.7 306.9C976.0 308.4 972.0 306.2 969.7 305.9C967.4 305.6 966.7 303.8 965.7 304.9C964.7 306.1 964.7 311.1 963.7 312.9C962.7 314.7 962.4 315.2 959.8 315.9C957.1 316.5 950.8 316.0 947.8 316.9C944.8 317.7 943.5 317.9 941.8 320.9C940.2 323.8 939.5 330.2 937.8 334.8C936.2 339.4 932.2 345.4 931.9 348.7C931.5 352.1 933.5 354.1 935.9 354.7C938.2 355.4 942.8 355.4 945.8 352.7C948.8 350.1 951.5 342.8 953.8 338.8C956.1 334.8 957.1 331.0 959.8 328.8C962.4 326.7 966.1 326.3 969.7 325.8C973.4 325.3 979.3 325.0 981.7 325.8C984.0 326.7 984.7 328.7 983.7 330.8C982.7 333.0 979.0 336.1 975.7 338.8C972.4 341.4 965.4 344.8 963.7 346.8C962.1 348.7 963.1 350.1 965.7 350.7C968.4 351.4 975.0 351.1 979.7 350.7C984.3 350.4 990.2 348.7 993.6 348.7C997.0 348.7 998.9 350.4 1000.0 350.7M1000.0 303.9C997.9 304.8 990.7 306.9 987.6 308.9C984.6 310.9 982.0 313.9 981.7 315.9C981.3 317.9 982.6 319.4 985.7 320.9C988.7 322.4 997.6 324.2 1000.0 324.8M910.0 390.0C910.3 388.8 908.6 384.5 912.0 382.6C915.3 380.7 923.2 380.0 929.9 378.6C936.5 377.3 946.1 375.1 951.8 374.6C957.4 374.1 961.3 374.0 963.7 375.6C966.2 377.3 966.4 382.2 966.7 384.6C967.1 387.0 965.9 389.1 965.7 390.0M935.9 390.0C936.9 389.6 939.8 387.6 941.8 387.6C943.8 387.6 946.8 389.6 947.8 390.0M911.2 390.0C912.5 390.6 915.5 393.5 919.0 393.9C922.4 394.3 928.1 393.2 931.9 392.6C935.8 391.9 940.6 390.4 942.3 390.0M919.0 410.8C919.2 409.5 917.7 404.9 920.3 403.0C922.9 401.0 930.0 400.2 934.5 399.1C939.1 398.0 944.9 398.0 947.5 396.5C950.1 395.0 949.7 391.1 950.1 390.0M919.0 410.8C921.1 411.2 926.8 414.0 931.9 413.4C937.1 412.7 946.5 407.1 950.1 406.9C953.8 406.7 954.5 409.9 954.0 412.1C953.6 414.2 951.6 418.1 947.5 419.9C943.4 421.6 933.2 421.0 929.4 422.5C925.5 424.0 923.3 427.4 924.2 429.0C925.0 430.5 930.6 430.7 934.5 431.6C938.4 432.4 944.1 432.0 947.5 434.2C951.0 436.3 953.2 439.8 955.3 444.5C957.5 449.3 958.8 456.7 960.5 462.7C962.3 468.8 963.5 475.7 965.7 480.9C967.9 486.1 971.3 490.0 973.5 493.9C975.7 497.8 979.1 501.7 978.7 504.3C978.3 506.9 974.4 509.5 970.9 509.5C967.4 509.5 961.4 507.7 957.9 504.3C954.5 500.8 952.7 493.9 950.1 488.7C947.5 483.5 944.9 477.0 942.3 473.1C939.7 469.2 936.7 468.4 934.5 465.3C932.4 462.3 931.5 458.8 929.4 454.9C927.2 451.0 924.2 445.8 921.6 441.9C919.0 438.1 915.7 432.4 913.8 431.6C911.8 430.7 910.3 433.7 909.9 436.8C909.4 439.8 909.2 446.3 911.2 449.7C913.1 453.2 918.5 454.5 921.6 457.5C924.6 460.6 927.6 464.9 929.4 467.9C931.1 471.0 932.4 474.0 931.9 475.7C931.5 477.4 929.4 478.7 926.8 478.3C924.2 477.9 919.4 475.3 916.4 473.1C913.3 471.0 910.7 466.2 908.6 465.3C906.4 464.5 905.1 466.2 903.4 467.9C901.6 469.7 899.5 471.4 898.2 475.7C896.9 480.0 895.8 488.3 895.6 493.9C895.4 499.5 896.9 504.0 896.9 509.5C896.9 515.0 895.8 524.0 895.6 526.9M965.7 390.0C965.7 394.3 964.8 408.2 965.7 416.0C966.6 423.8 968.7 430.3 970.9 436.8C973.1 443.2 976.5 450.6 978.7 454.9C980.9 459.3 981.3 460.6 983.9 462.7C986.5 464.9 991.6 467.1 994.3 467.9C997.0 468.8 999.0 467.9 1000.0 467.9M1000.0 429.0C998.2 429.4 992.2 430.3 989.1 431.6C986.0 432.9 982.2 434.2 981.3 436.8C980.4 439.4 981.7 445.6 983.9 447.1C986.1 448.7 991.6 446.1 994.3 445.8C997.0 445.6 999.0 445.8 1000.0 445.8M1000.0 475.7C998.6 476.1 994.4 477.0 991.7 478.3C989.0 479.6 985.6 481.8 983.9 483.5C982.2 485.2 980.4 488.1 981.3 488.7C982.2 489.4 986.0 488.1 989.1 487.4C992.2 486.8 998.2 485.2 1000.0 484.8M880.0 434.2C881.7 435.0 888.2 436.8 890.4 439.4C892.6 441.9 893.0 446.7 893.0 449.7C893.0 452.8 891.9 454.9 890.4 457.5C888.9 460.1 884.3 463.2 883.9 465.3C883.5 467.5 885.8 469.2 887.8 470.5C889.7 471.8 894.3 472.7 895.6 473.1M906.0 526.9C907.3 523.5 913.3 512.4 913.8 506.9C914.2 501.4 909.9 497.8 908.6 493.9C907.3 490.0 904.2 485.7 906.0 483.5C907.7 481.3 914.6 480.5 919.0 480.9C923.3 481.3 928.1 483.1 931.9 486.1C935.8 489.1 939.7 494.8 942.3 499.1C944.9 503.4 946.2 507.4 947.5 512.1C948.8 516.7 949.7 524.4 950.1 526.9M963.1 526.9C963.5 525.7 964.4 521.5 965.7 519.9C967.0 518.3 969.6 516.1 970.9 517.3C972.2 518.4 973.1 525.3 973.5 526.9M880.0 486.1C880.9 487.4 883.5 490.0 885.2 493.9C886.9 497.8 889.1 504.0 890.4 509.5C891.7 515.0 892.6 524.0 893.0 526.9M13.2 511.0C13.6 512.5 14.3 517.6 15.4 519.8C16.5 522.0 18.0 523.8 19.8 524.2C21.6 524.6 24.9 523.8 26.4 522.0C27.9 520.2 28.2 515.0 28.6 513.2C29.0 511.4 28.6 511.4 28.6 511.0M33.0 511.0C33.4 512.5 34.7 517.5 35.2 519.8C35.8 522.1 36.1 524.2 36.3 525.1M63.8 511.0C63.6 512.5 62.3 517.6 62.7 519.8C63.1 522.0 64.7 524.2 66.0 524.2C67.3 524.2 69.7 522.0 70.4 519.8C71.1 517.6 70.4 512.5 70.4 511.0M83.6 511.0C85.1 511.7 89.5 514.7 92.4 515.4C95.3 516.1 98.6 516.1 101.2 515.4C103.8 514.7 106.7 511.7 107.8 511.0M88.0 525.1C89.8 524.2 94.6 521.2 99.0 519.8C103.4 518.4 110.7 516.5 114.4 516.5C118.1 516.5 119.5 518.4 121.0 519.8C122.5 521.2 122.8 524.2 123.2 525.1M121.0 511.0C121.4 512.1 122.1 517.2 123.2 517.6C124.3 518.0 127.1 514.3 127.6 513.2C128.2 512.1 126.7 511.4 126.5 511.0M154.0 525.1C156.2 523.8 162.4 519.6 167.2 517.6C172.0 515.6 179.0 513.2 182.6 513.2C186.3 513.2 187.8 515.6 189.2 517.6C190.7 519.6 191.1 523.8 191.4 525.1M224.6 526.2C224.8 524.9 225.4 520.9 225.7 518.4C226.1 515.9 226.7 512.6 226.9 511.5M249.9 523.0C251.4 521.5 255.3 515.7 259.1 513.8C262.9 511.9 269.4 511.1 272.9 511.5C276.3 511.9 279.4 514.4 279.8 516.1C280.2 517.8 278.3 520.7 275.2 521.8C272.1 523.0 264.8 522.3 261.4 523.0C257.9 523.7 255.6 525.7 254.5 526.2M353.4 526.2C354.2 525.7 356.8 523.0 358.0 523.0C359.1 523.0 359.9 525.7 360.3 526.2M406.3 526.2C407.4 524.9 410.9 520.5 413.2 518.4C415.5 516.3 418.2 514.2 420.1 513.8C422.0 513.4 422.8 516.5 424.7 516.1C426.6 515.7 430.4 512.3 431.6 511.5M0.0 409.1C0.6 409.3 2.2 409.8 3.5 410.2C4.8 410.6 7.1 411.4 7.8 411.6M0.0 446.4C0.6 446.7 2.2 447.6 3.5 448.2C4.8 448.7 7.1 449.6 7.8 449.9M0.0 474.8C0.6 475.3 2.2 477.1 3.5 478.3C4.8 479.5 7.1 481.3 7.8 481.8M0.0 382.6C0.7 382.0 3.0 380.2 4.3 379.0C5.6 377.8 7.2 376.1 7.8 375.5" stroke="#b08e52"/><path d="M280.5 27.0C280.2 29.5 279.5 35.7 279.0 42.0C278.5 48.2 277.9 57.5 277.5 64.5C277.1 71.5 277.0 77.1 276.7 84.0C276.5 90.9 276.1 102.4 276.0 106.0M285.3 27.0C285.5 28.2 285.6 31.7 286.8 34.5C288.0 37.2 290.8 40.5 292.5 43.5C294.2 46.5 296.5 49.0 297.0 52.5C297.5 56.0 296.5 61.0 295.5 64.5C294.5 68.0 292.1 70.5 291.0 73.5C289.9 76.5 288.6 80.1 288.7 82.5C288.9 84.9 290.5 86.5 291.7 87.7C293.0 89.0 295.5 89.6 296.2 90.0M285.0 106.0C285.3 105.1 285.8 101.9 286.8 100.5C287.8 99.1 289.4 98.2 291.0 97.5C292.6 96.8 295.4 96.5 296.2 96.3M274.5 106.0C274.6 107.5 275.2 111.7 275.2 115.0C275.2 118.2 275.1 121.5 274.5 125.5C273.9 129.5 272.5 134.7 271.5 139.0C270.5 143.2 269.2 147.0 268.5 151.0C267.7 155.0 267.0 159.5 267.0 163.0C267.0 166.5 267.2 170.4 268.5 172.0C269.7 173.6 272.7 174.2 274.5 172.7C276.2 171.2 278.0 166.6 279.0 163.0C280.0 159.4 280.0 156.0 280.5 151.0C281.0 146.0 281.5 137.7 282.0 133.0C282.5 128.2 282.5 124.5 283.5 122.5C284.5 120.5 286.5 120.7 288.0 121.0C289.5 121.2 291.1 123.1 292.5 124.0C293.9 124.9 295.6 125.9 296.2 126.2M285.0 106.0C285.5 106.5 286.5 107.7 288.0 109.0C289.5 110.2 292.6 112.5 294.0 113.5C295.4 114.5 295.9 114.7 296.2 115.0M0.0 304.5C1.0 303.0 3.5 297.5 6.0 295.5C8.5 293.5 11.0 293.2 15.0 292.5C19.0 291.7 26.5 292.7 30.0 291.0C33.5 289.2 34.2 284.6 36.0 282.0C37.7 279.4 39.0 276.2 40.5 275.2C42.0 274.2 43.2 274.6 45.0 276.0C46.7 277.4 49.0 280.5 51.0 283.5C53.0 286.5 55.0 291.6 57.0 294.0C59.0 296.4 60.5 297.6 63.0 297.7C65.5 297.9 69.0 295.5 72.0 294.7C75.0 294.0 79.2 292.9 81.0 293.2C82.7 293.6 83.0 295.6 82.5 297.0C82.0 298.4 80.2 300.0 78.0 301.5C75.7 303.0 72.0 304.0 69.0 306.0C66.0 308.0 62.2 312.5 60.0 313.5C57.7 314.5 57.2 313.5 55.5 312.0C53.7 310.5 51.5 307.1 49.5 304.5C47.5 301.9 45.2 297.9 43.5 296.2C41.7 294.6 41.2 294.4 39.0 294.7C36.7 295.1 33.2 296.9 30.0 298.5C26.7 300.1 22.2 302.7 19.5 304.5C16.7 306.2 14.2 307.0 13.5 309.0C12.7 311.0 14.0 313.5 15.0 316.5C16.0 319.5 17.7 323.7 19.5 327.0C21.2 330.2 23.7 333.3 25.5 336.0C27.2 338.7 29.2 341.9 30.0 343.0M0.0 324.0C1.0 323.1 4.0 319.2 6.0 318.7C8.0 318.2 10.2 319.1 12.0 321.0C13.7 322.9 15.0 327.0 16.5 330.0C18.0 333.0 19.7 336.8 21.0 339.0C22.2 341.2 23.5 342.4 24.0 343.0M905.0 86.0C906.1 85.1 909.5 82.8 912.0 81.0C914.4 79.2 918.6 76.0 919.9 75.0M905.0 103.9C906.5 103.6 911.5 103.1 913.9 101.9C916.4 100.7 918.6 98.7 919.9 96.9C921.2 95.1 920.9 92.4 921.9 90.9C922.9 89.4 924.4 88.1 925.9 87.9C927.4 87.8 929.9 88.1 930.9 89.9C931.9 91.8 931.9 94.8 931.9 98.9C931.9 103.1 930.9 110.5 930.9 114.8C930.9 119.2 930.9 122.5 931.9 124.8C932.9 127.1 934.9 128.8 936.9 128.8C938.8 128.8 942.2 127.1 943.8 124.8C945.5 122.5 946.6 119.2 946.8 114.8C947.0 110.5 945.8 103.6 944.8 98.9C943.8 94.3 942.0 90.9 940.8 87.0C939.7 83.0 938.3 77.0 937.8 75.0M979.7 75.0C980.3 75.5 982.2 77.5 983.7 78.0C985.2 78.5 987.6 78.5 988.6 78.0C989.6 77.5 989.5 75.5 989.6 75.0M921.9 376.6C921.7 374.6 920.3 367.5 920.9 364.7C921.6 361.9 922.7 359.9 925.9 359.7C929.1 359.5 936.2 363.5 939.8 363.7C943.5 363.9 945.2 362.5 947.8 360.7C950.5 358.9 952.5 353.9 955.8 352.7C959.1 351.6 963.7 352.6 967.7 353.7C971.7 354.9 975.7 357.9 979.7 359.7C983.7 361.5 988.6 362.5 991.6 364.7C994.6 366.8 996.9 369.7 997.6 372.6C998.3 375.6 996.6 379.7 995.6 382.6C994.6 385.5 992.3 388.8 991.6 390.0M921.9 376.6C922.9 375.1 923.2 369.5 927.9 367.7C932.5 365.8 942.8 365.8 949.8 365.7C956.8 365.5 964.1 366.0 969.7 366.7C975.4 367.3 980.7 368.0 983.7 369.7C986.7 371.3 987.6 373.8 987.6 376.6C987.6 379.5 985.0 384.4 983.7 386.6C982.3 388.8 980.3 389.4 979.7 390.0M973.5 390.0C973.1 392.2 970.5 399.1 970.9 403.0C971.3 406.9 973.5 410.1 976.1 413.4C978.7 416.6 983.0 420.7 986.5 422.5C990.0 424.2 994.6 423.8 996.9 423.8C999.1 423.8 999.5 422.7 1000.0 422.5M989.1 390.0C988.2 391.7 984.3 396.9 983.9 400.4C983.5 403.9 984.8 408.2 986.5 410.8C988.2 413.4 992.0 414.9 994.3 416.0C996.5 417.1 999.0 417.1 1000.0 417.3M10.6 340.0C11.5 341.5 14.2 346.5 16.0 348.9C17.7 351.2 20.4 353.3 21.3 354.2" stroke="#2b8fc2"/><path d="M34.5 185.0C34.7 183.1 35.9 176.9 36.0 173.5C36.1 170.1 34.5 166.5 35.2 164.5C36.0 162.5 38.4 161.9 40.5 161.5C42.6 161.1 46.0 163.0 48.0 162.2C50.0 161.5 51.5 159.4 52.5 157.0C53.5 154.6 52.7 150.2 54.0 148.0C55.2 145.7 57.7 144.2 60.0 143.5C62.2 142.7 65.5 142.2 67.5 143.5C69.5 144.7 70.5 148.5 72.0 151.0C73.5 153.5 74.5 157.0 76.5 158.5C78.5 160.0 81.7 160.2 84.0 160.0C86.2 159.7 87.5 159.7 90.0 157.0C92.5 154.2 96.5 147.5 99.0 143.5C101.5 139.5 103.5 135.7 105.0 133.0C106.5 130.2 106.2 128.1 108.0 127.0C109.7 125.9 112.5 125.2 115.5 126.2C118.5 127.2 122.7 130.1 126.0 133.0C129.2 135.9 132.2 139.2 135.0 143.5C137.7 147.7 140.5 153.5 142.5 158.5C144.5 163.5 146.0 169.1 147.0 173.5C148.0 177.9 148.2 183.1 148.5 185.0M55.5 185.0C55.7 182.9 55.5 174.9 57.0 172.0C58.5 169.1 61.5 168.5 64.5 167.5C67.5 166.5 71.2 166.4 75.0 166.0C78.7 165.6 83.5 165.7 87.0 165.2C90.5 164.7 93.0 165.1 96.0 163.0C99.0 160.9 102.5 156.0 105.0 152.5C107.5 149.0 109.2 144.4 111.0 142.0C112.7 139.6 114.0 138.2 115.5 138.2C117.0 138.2 118.7 139.4 120.0 142.0C121.2 144.6 122.7 150.5 123.0 154.0C123.2 157.5 123.0 160.2 121.5 163.0C120.0 165.7 116.7 168.0 114.0 170.5C111.2 173.0 107.0 175.6 105.0 178.0C103.0 180.4 102.5 183.9 102.0 185.0M105.0 185.0C106.5 183.4 110.2 178.2 114.0 175.0C117.7 171.8 124.5 167.0 127.5 166.0C130.5 165.0 131.2 165.8 132.0 169.0C132.7 172.2 132.0 182.4 132.0 185.0M43.5 185.0C44.2 187.5 47.5 195.5 48.0 200.0C48.5 204.5 47.4 209.1 46.5 212.0C45.6 214.9 42.9 216.1 42.7 217.2C42.6 218.4 44.4 219.1 45.7 218.7C47.1 218.4 49.7 217.1 51.0 215.0C52.2 212.9 53.1 209.7 53.2 206.0C53.4 202.2 51.6 195.1 51.7 192.5C51.9 189.9 53.0 190.0 54.0 190.2C55.0 190.5 56.6 191.9 57.7 194.0C58.9 196.1 59.6 200.6 60.7 203.0C61.9 205.4 64.1 208.7 64.5 208.2C64.9 207.7 63.7 202.6 63.0 200.0C62.2 197.4 60.6 195.0 60.0 192.5C59.4 190.0 59.4 186.2 59.2 185.0M139.5 185.0C139.2 185.7 137.7 188.2 138.0 189.5C138.2 190.7 139.7 192.5 141.0 192.5C142.2 192.5 144.6 190.7 145.5 189.5C146.4 188.2 146.1 185.7 146.2 185.0M294.0 198.5C292.0 199.0 286.0 200.5 282.0 201.5C278.0 202.5 272.5 203.2 270.0 204.5C267.5 205.7 267.7 206.2 267.0 209.0C266.2 211.7 266.7 217.7 265.5 221.0C264.2 224.2 261.5 226.5 259.5 228.5C257.5 230.5 254.2 231.0 253.5 233.0C252.7 235.0 253.5 238.7 255.0 240.5C256.5 242.2 261.0 241.5 262.5 243.5C264.0 245.5 263.5 249.1 264.0 252.5C264.5 255.9 265.2 262.1 265.5 264.0M294.0 209.0C292.0 210.0 285.0 213.2 282.0 215.0C279.0 216.7 277.0 215.7 276.0 219.5C275.0 223.2 275.7 232.0 276.0 237.5C276.2 243.0 277.0 248.1 277.5 252.5C278.0 256.9 278.7 262.1 279.0 264.0M265.5 264.0C265.2 265.5 265.2 269.7 264.0 273.0C262.7 276.2 257.5 281.7 258.0 283.5C258.5 285.2 264.2 284.7 267.0 283.5C269.7 282.2 272.7 279.2 274.5 276.0C276.2 272.7 277.0 266.0 277.5 264.0M951.8 180.0C952.5 178.1 953.8 171.5 955.8 168.6C957.8 165.7 960.8 164.0 963.7 162.6C966.7 161.3 970.7 160.7 973.7 160.7C976.7 160.7 980.2 160.3 981.7 162.6C983.2 165.0 982.7 171.7 982.7 174.6C982.7 177.5 981.8 179.1 981.7 180.0M950.8 180.0C950.5 181.3 950.6 185.6 948.8 188.0C947.0 190.3 943.3 193.3 939.8 193.9C936.4 194.6 931.9 193.4 927.9 192.0C923.9 190.5 918.8 185.5 915.9 185.0C913.1 184.5 911.3 186.8 911.0 189.0C910.6 191.1 912.0 195.3 913.9 197.9C915.9 200.6 921.1 201.2 922.9 204.9C924.7 208.6 924.7 215.0 924.9 219.8C925.1 224.7 923.4 229.8 923.9 233.8C924.4 237.8 924.9 242.3 927.9 243.7C930.9 245.2 940.7 244.7 941.8 242.7C943.0 240.8 936.5 235.9 934.9 231.8C933.2 227.6 931.9 221.8 931.9 217.8C931.9 213.9 932.4 210.5 934.9 207.9C937.4 205.2 943.8 204.9 946.8 201.9C949.8 198.9 951.0 192.6 952.8 190.0C954.6 187.3 956.4 185.6 957.8 186.0C959.1 186.3 960.4 188.6 960.8 192.0C961.1 195.3 959.4 201.9 959.8 205.9C960.1 209.9 961.6 214.5 962.7 215.9C963.9 217.2 965.9 216.9 966.7 213.9C967.6 210.9 967.4 202.6 967.7 197.9C968.1 193.3 967.9 188.5 968.7 186.0C969.6 183.5 971.5 182.3 972.7 183.0C973.9 183.7 975.2 186.5 975.7 190.0C976.2 193.4 975.0 200.3 975.7 203.9C976.4 207.6 978.4 211.2 979.7 211.9C981.0 212.5 983.3 210.5 983.7 207.9C984.0 205.2 982.2 200.6 981.7 195.9C981.2 191.3 980.8 182.7 980.7 180.0M136.4 525.1C136.8 523.5 136.8 517.7 138.6 515.4C140.4 513.1 145.9 511.7 147.4 511.0M145.2 525.1C145.6 523.8 145.6 519.6 147.4 517.6C149.2 515.6 154.7 513.9 156.2 513.2M204.6 525.1C204.8 523.1 205.4 515.5 205.7 513.2C206.1 510.9 206.6 511.4 206.8 511.0M233.8 511.5C234.0 513.0 234.2 518.8 234.9 520.7C235.7 522.6 237.1 523.8 238.4 523.0C239.7 522.2 241.5 518.0 243.0 516.1C244.5 514.2 246.8 512.3 247.6 511.5" stroke="#1d4576"/><path d="M57.0 27.0C56.0 28.5 52.7 33.5 51.0 36.0C49.2 38.5 47.0 40.2 46.5 42.0C46.0 43.7 46.7 45.5 48.0 46.5C49.2 47.5 52.0 47.5 54.0 48.0C56.0 48.5 59.0 49.2 60.0 49.5M61.5 34.5C62.2 33.7 63.7 30.9 66.0 30.0C68.2 29.1 71.7 29.0 75.0 29.2C78.2 29.5 82.5 31.4 85.5 31.5C88.5 31.6 91.5 30.7 93.0 30.0C94.5 29.2 94.2 27.5 94.5 27.0M70.5 52.5C71.7 53.2 74.7 55.2 78.0 57.0C81.2 58.7 86.2 61.2 90.0 63.0C93.7 64.7 98.2 66.1 100.5 67.5C102.7 68.9 103.7 70.4 103.5 71.2C103.2 72.1 101.5 73.1 99.0 72.7C96.5 72.4 92.0 70.6 88.5 69.0C85.0 67.4 80.7 64.4 78.0 63.0C75.2 61.6 73.0 61.1 72.0 60.7M64.5 52.5C64.2 54.0 63.7 58.5 63.0 61.5C62.2 64.5 62.0 68.0 60.0 70.5C58.0 73.0 53.5 74.5 51.0 76.5C48.5 78.5 46.2 79.5 45.0 82.5C43.7 85.5 43.0 91.5 43.5 94.5C44.0 97.5 47.2 99.5 48.0 100.5M108.0 27.0C108.5 28.5 110.1 32.7 111.0 36.0C111.9 39.2 113.1 44.2 113.2 46.5C113.4 48.7 112.4 50.2 111.7 49.5C111.1 48.7 110.4 45.7 109.5 42.0C108.6 38.2 107.0 29.5 106.5 27.0M208.5 27.0C208.0 29.5 206.7 37.0 205.5 42.0C204.2 47.0 202.7 52.0 201.0 57.0C199.2 62.0 196.7 66.5 195.0 72.0C193.2 77.5 191.4 85.9 190.5 90.0C189.5 94.0 190.0 96.0 189.3 96.3C188.5 96.5 187.0 94.0 186.0 91.5C184.9 88.9 184.4 83.4 183.0 81.0C181.6 78.6 180.2 77.4 177.7 77.2C175.2 77.1 170.7 78.9 168.0 80.2C165.3 81.6 162.8 83.6 161.7 85.5C160.6 87.4 160.2 89.0 161.2 91.5C162.3 94.0 165.6 98.1 168.0 100.5C170.4 102.9 174.2 105.1 175.5 106.0M196.5 27.0C196.2 29.5 195.7 37.0 195.0 42.0C194.2 47.0 193.1 53.2 192.0 57.0C190.9 60.7 190.2 63.6 188.2 64.5C186.2 65.4 182.6 62.7 180.0 62.2C177.4 61.8 174.7 60.7 172.5 61.8C170.2 62.9 168.7 66.8 166.5 69.0C164.2 71.2 161.7 73.4 159.0 75.0C156.2 76.6 151.5 78.1 150.0 78.7M150.0 121.0C148.7 121.7 145.0 124.0 142.5 125.5C140.0 127.0 136.1 128.2 135.0 130.0C133.9 131.7 134.7 133.0 135.7 136.0C136.7 139.0 139.4 144.2 141.0 148.0C142.6 151.7 144.0 155.2 145.5 158.5C147.0 161.7 149.2 166.0 150.0 167.5M150.0 137.5C149.7 138.2 148.5 140.5 148.5 142.0C148.5 143.5 149.7 145.7 150.0 146.5M150.0 106.0C150.3 107.1 151.8 110.4 151.8 112.7C151.8 115.1 150.3 119.0 150.0 120.2M177.0 106.0C178.2 106.7 182.0 109.0 184.5 110.5C187.0 112.0 190.4 113.2 192.0 115.0C193.6 116.7 194.2 119.2 194.2 121.0C194.2 122.7 193.4 124.9 192.0 125.5C190.6 126.1 188.5 125.7 186.0 124.7C183.5 123.7 180.0 121.4 177.0 119.5C174.0 117.6 170.4 114.7 168.0 113.5C165.6 112.2 164.0 111.5 162.7 112.0C161.5 112.5 161.1 114.2 160.5 116.5C159.9 118.7 160.0 122.7 159.0 125.5C158.0 128.2 156.0 131.0 154.5 133.0C153.0 135.0 150.7 136.7 150.0 137.5M150.0 146.5C151.0 148.0 154.2 152.2 156.0 155.5C157.7 158.7 159.2 162.5 160.5 166.0C161.7 169.5 162.7 173.3 163.5 176.5C164.2 179.7 164.7 183.6 165.0 185.0M905.0 201.9C905.6 202.6 908.0 202.9 909.0 205.9C910.0 208.9 910.6 214.9 911.0 219.8C911.3 224.8 911.5 231.5 911.0 235.8C910.5 240.1 909.0 243.7 908.0 245.7C907.0 247.7 905.5 247.4 905.0 247.7M905.0 352.7C905.8 353.7 908.8 356.0 910.0 358.7C911.1 361.4 912.1 365.7 912.0 368.7C911.8 371.7 910.1 375.0 909.0 376.6C907.8 378.3 905.6 378.3 905.0 378.6M903.9 400.4C904.7 400.0 907.1 397.6 908.6 397.8C910.0 398.0 912.5 400.4 912.5 401.7C912.5 403.0 910.0 404.9 908.6 405.6C907.1 406.2 904.7 405.6 903.9 405.6M896.9 430.0C897.3 432.0 898.4 438.2 899.5 441.9C900.6 445.7 902.1 450.2 903.4 452.3C904.7 454.5 906.4 455.8 907.3 454.9C908.1 454.1 908.8 450.6 908.6 447.1C908.4 443.7 906.8 437.0 906.0 434.2C905.2 431.3 904.2 430.7 903.9 430.0M293.6 526.2C293.6 524.5 293.2 518.6 293.6 516.1C294.0 513.6 295.5 512.3 295.9 511.5M300.5 526.2C302.0 524.5 305.5 517.8 309.7 516.1C313.9 514.4 320.8 515.7 325.8 516.1C330.8 516.5 335.4 518.8 339.6 518.4C343.8 518.0 348.4 514.9 351.1 513.8C353.8 512.6 354.9 511.9 355.7 511.5M367.2 518.4C369.5 517.4 375.6 513.4 381.0 512.6C386.4 511.9 395.2 513.2 399.4 513.8C403.6 514.4 407.8 515.1 406.3 516.1C404.8 517.1 395.9 518.8 390.2 519.5C384.4 520.3 375.6 520.9 371.8 520.7C368.0 520.5 368.0 518.8 367.2 518.4M126.7 242.0C128.8 242.8 135.7 245.7 139.4 246.8C143.1 247.8 145.7 247.6 148.9 248.4C152.0 249.1 156.0 249.4 158.4 251.5C160.8 253.6 161.0 260.2 163.1 261.0C165.2 261.8 168.1 259.7 171.0 256.3C174.0 252.8 177.9 243.6 180.6 240.4C183.2 237.3 184.8 236.5 186.9 237.3C189.0 238.1 190.6 240.7 193.2 245.2C195.9 249.7 199.0 258.6 202.7 264.2C206.4 269.7 211.2 275.5 215.4 278.4C219.6 281.3 223.3 282.4 228.1 281.6C232.8 280.8 239.7 277.7 243.9 273.7C248.1 269.7 251.6 262.1 253.4 257.9C255.3 253.6 253.9 249.1 255.0 248.4C256.0 247.6 259.5 249.9 259.7 253.1C260.0 256.3 259.2 261.8 256.6 267.4C253.9 272.9 249.7 281.3 243.9 286.4C238.1 291.4 228.6 296.1 221.7 297.4C214.9 298.8 208.0 296.7 202.7 294.3C197.4 291.9 193.7 286.9 190.1 283.2C186.4 279.5 183.2 275.5 180.6 272.1C177.9 268.7 176.9 262.9 174.2 262.6C171.6 262.3 167.1 266.6 164.7 270.5C162.3 274.5 161.3 279.0 160.0 286.4C158.6 293.8 158.1 311.7 156.8 314.9C155.5 318.0 153.4 311.2 152.0 305.4C150.7 299.6 151.0 285.6 148.9 280.0C146.8 274.5 143.1 272.9 139.4 272.1C135.7 271.3 130.9 274.0 126.7 275.3C122.5 276.6 116.9 277.7 114.0 280.0C111.1 282.4 109.5 285.3 109.3 289.5C109.0 293.8 112.7 303.8 112.4 305.4C112.2 307.0 109.5 303.3 107.7 299.0C105.8 294.8 102.9 285.8 101.4 280.0C99.8 274.2 97.7 267.9 98.2 264.2C98.7 260.5 101.4 258.4 104.5 257.9C107.7 257.3 113.0 260.0 117.2 261.0C121.4 262.1 126.7 264.2 129.9 264.2C133.0 264.2 135.9 263.4 136.2 261.0C136.5 258.6 133.0 253.1 131.5 249.9C129.9 246.8 127.5 243.3 126.7 242.0" stroke="#aab6c4"/><g clip-path="url(#wc0)"><path d="M442.2 439.6C443.3 439.4 446.2 438.6 448.8 438.5C451.4 438.4 455.2 438.0 457.6 439.0C460.0 440.0 461.5 442.1 463.1 444.5C464.8 446.9 466.4 450.0 467.5 453.3C468.6 456.6 469.2 460.7 469.7 464.3C470.3 468.0 470.6 471.7 470.8 475.4C471.1 479.0 471.3 484.3 471.4 486.0M442.2 451.7C443.3 451.5 446.6 450.5 448.8 450.6C451.0 450.7 453.4 450.9 455.4 452.2C457.4 453.6 459.6 456.1 460.9 458.8C462.2 461.6 462.7 465.4 463.1 468.7C463.6 472.1 463.5 475.8 463.7 478.7C463.9 481.5 464.1 484.8 464.2 486.0M442.8 461.0C442.9 462.0 443.6 464.5 443.9 466.5C444.1 468.6 443.9 471.7 444.4 473.2C444.9 474.6 445.5 475.7 446.6 475.4C447.7 475.0 449.7 472.4 451.0 471.0C452.3 469.5 453.4 466.9 454.3 466.5C455.2 466.2 456.1 466.9 456.5 468.7C457.0 470.6 457.1 474.7 457.1 477.6C457.1 480.4 456.6 484.6 456.5 486.0M465.3 431.3C465.9 432.2 467.0 435.0 468.6 436.8C470.3 438.6 472.7 440.3 475.2 442.3C477.8 444.3 481.3 447.5 484.1 448.9C486.8 450.4 489.7 450.4 491.8 451.1C493.9 451.9 496.2 452.4 496.7 453.3C497.3 454.2 496.8 455.5 495.1 456.6C493.3 457.7 489.0 458.8 486.3 459.9C483.5 461.0 480.2 461.8 478.5 463.2C476.9 464.7 476.9 466.4 476.3 468.7C475.8 471.1 475.5 474.7 475.2 477.6C475.0 480.4 474.8 484.6 474.7 486.0M478.5 431.3C479.3 431.9 481.5 433.6 483.0 434.6C484.4 435.6 485.9 437.0 487.4 437.4C488.8 437.7 490.5 437.5 491.8 436.8C493.0 436.2 494.4 434.4 495.1 433.5C495.7 432.6 495.5 431.7 495.6 431.3M501.1 431.3C500.6 432.8 497.7 437.0 497.8 440.1C497.9 443.2 501.0 447.3 501.7 450.0C502.3 452.8 502.8 454.2 501.7 456.6C500.6 459.0 497.6 462.0 495.1 464.3C492.5 466.7 488.1 469.1 486.3 471.0C484.4 472.8 483.7 474.0 484.1 475.4C484.4 476.7 486.8 479.0 488.5 479.2C490.1 479.4 492.1 478.2 494.0 476.5C495.8 474.7 497.8 471.9 499.5 468.7C501.1 465.6 502.4 461.8 503.9 457.7C505.3 453.7 506.8 448.9 508.3 444.5C509.8 440.1 512.0 433.5 512.7 431.3M521.5 431.3C522.4 432.6 525.2 435.9 527.0 439.0C528.8 442.1 530.7 446.9 532.5 450.0C534.3 453.1 536.2 455.9 538.0 457.7C539.9 459.6 541.9 460.9 543.5 461.0C545.2 461.2 547.6 460.7 547.9 458.8C548.3 457.0 546.5 452.6 545.7 450.0C545.0 447.5 543.5 445.3 543.5 443.4C543.5 441.6 544.6 440.2 545.7 439.0C546.8 437.8 549.3 436.7 550.0 436.3M501.7 486.0C502.4 484.1 504.4 478.4 506.1 474.3C507.7 470.1 509.8 464.7 511.6 461.0C513.4 457.4 515.4 454.1 517.1 452.2C518.7 450.4 519.8 449.7 521.5 450.0C523.1 450.4 525.0 452.2 527.0 454.4C529.0 456.6 531.2 460.7 533.6 463.2C536.0 465.8 538.6 468.4 541.3 469.9C544.1 471.3 548.6 471.7 550.0 472.1M510.5 486.0C511.2 484.1 513.4 477.1 514.9 474.3C516.4 471.4 517.5 469.9 519.3 468.7C521.1 467.6 523.3 467.1 525.9 467.6C528.5 468.2 532.0 470.4 534.7 472.1C537.5 473.7 539.9 476.5 542.4 477.6C545.0 478.7 548.8 478.5 550.0 478.7M520.4 486.0C521.3 485.2 524.1 481.9 525.9 480.9C527.7 479.8 529.2 479.4 531.4 479.8C533.6 480.1 537.3 482.0 539.1 483.1C541.0 484.1 541.9 485.5 542.4 486.0M535.8 431.3C536.4 431.6 537.8 432.8 539.1 433.0C540.4 433.1 542.4 432.7 543.5 432.4C544.6 432.1 545.4 431.5 545.7 431.3" stroke="#b08e52"/></g><g clip-path="url(#wc1)"><path d="M550.0 436.3C550.7 435.8 552.9 434.3 554.4 433.5C555.9 432.7 558.1 431.7 558.8 431.3M550.0 471.0C550.7 470.4 553.6 469.3 554.4 467.6C555.2 466.0 555.3 463.4 555.0 461.0C554.6 458.7 553.0 455.7 552.2 453.3C551.4 450.9 550.4 447.8 550.0 446.7M568.7 431.3C568.0 434.4 565.6 444.2 564.3 450.0C563.0 455.9 562.3 462.0 561.0 466.5C559.7 471.1 557.9 474.3 556.6 477.6C555.3 480.8 553.9 484.6 553.3 486.0M585.2 431.3C585.6 431.4 586.7 431.9 587.4 431.9C588.2 431.9 589.3 431.4 589.6 431.3M569.8 486.0C570.4 481.9 572.0 468.5 573.1 461.0C574.2 453.6 575.3 445.3 576.4 441.2C577.5 437.2 578.3 437.5 579.7 436.8C581.2 436.1 582.9 435.7 585.2 436.8C587.6 437.9 591.3 441.0 594.1 443.4C596.8 445.8 599.4 449.7 601.8 451.1C604.1 452.6 606.0 453.1 608.4 452.2C610.8 451.3 613.7 448.2 616.1 445.6C618.5 443.1 621.0 439.2 622.7 436.8C624.3 434.4 625.4 432.2 626.0 431.3M577.5 486.0C577.5 483.7 576.8 476.2 577.5 472.1C578.3 467.9 580.5 464.0 581.9 461.0C583.4 458.1 584.9 455.3 586.3 454.4C587.8 453.5 589.1 454.1 590.7 455.5C592.4 457.0 594.2 460.1 596.3 463.2C598.3 466.4 601.0 470.5 602.9 474.3C604.7 478.1 606.5 484.1 607.3 486.0M579.7 486.0C580.1 483.7 580.7 475.2 581.9 472.1C583.2 468.9 585.6 467.6 587.4 467.1C589.3 466.5 591.1 467.4 593.0 468.7C594.8 470.1 596.8 472.5 598.5 475.4C600.1 478.2 602.1 484.3 602.9 486.0M614.4 486.0C614.5 483.7 614.7 475.9 615.0 472.1C615.3 468.3 615.0 465.8 616.1 463.2C617.2 460.7 619.8 458.8 621.6 456.6C623.4 454.4 625.1 452.2 627.1 450.0C629.1 447.8 630.8 445.1 633.7 443.4C636.6 441.8 641.6 440.8 644.7 440.1C647.8 439.4 650.8 439.9 652.4 439.0C654.1 438.1 654.4 435.9 654.6 434.6C654.8 433.3 653.7 431.9 653.5 431.3M624.9 486.0C624.9 484.1 624.3 478.4 624.9 474.3C625.4 470.1 626.4 464.3 628.2 461.0C630.0 457.7 632.8 456.3 635.9 454.4C639.0 452.6 642.9 451.1 646.9 450.0C650.9 448.9 657.8 448.2 660.0 447.8M629.3 486.0C629.7 484.3 630.6 477.5 631.5 475.4C632.4 473.2 633.5 472.8 634.8 473.2C636.1 473.5 637.9 475.4 639.2 477.6C640.5 479.7 642.0 484.6 642.5 486.0M660.0 454.4C658.2 455.5 652.2 458.8 649.1 461.0C646.0 463.2 641.8 466.0 641.4 467.6C641.0 469.3 645.1 469.9 646.9 471.0C648.8 472.1 651.3 471.7 652.4 474.3C653.5 476.8 653.3 484.1 653.5 486.0M660.0 463.2C659.7 463.8 658.4 464.2 657.9 466.5C657.5 468.9 657.4 474.3 657.4 477.6C657.4 480.8 657.8 484.6 657.9 486.0" stroke="#b08e52"/><path d="M602.9 431.3C602.6 432.4 600.8 435.7 601.2 437.9C601.6 440.1 603.3 444.0 605.1 444.5C606.8 445.1 609.8 442.9 611.7 441.2C613.5 439.6 615.2 436.3 616.1 434.6C617.0 433.0 617.0 431.9 617.2 431.3" stroke="#aab6c4"/></g><g clip-path="url(#wc2)"><path d="M456.0 480.0C455.3 481.7 452.8 487.5 452.1 489.9C451.4 492.3 450.8 493.1 451.6 494.3C452.3 495.5 454.9 496.7 456.5 497.1C458.1 497.4 460.0 497.9 460.9 496.5C461.8 495.1 461.7 491.6 462.0 488.8C462.3 486.1 462.5 481.5 462.6 480.0M469.7 480.0C469.6 481.1 468.8 485.0 469.2 486.6C469.5 488.3 470.9 489.9 471.9 489.9C472.9 489.9 474.5 488.3 475.2 486.6C475.9 485.0 476.1 481.1 476.3 480.0M440.0 513.0C440.7 511.9 442.8 508.5 444.4 506.4C446.1 504.3 448.3 501.1 449.9 500.4C451.6 499.6 453.2 500.6 454.3 502.0C455.4 503.5 456.1 507.9 456.5 509.0M501.6 480.0C501.4 481.1 500.3 484.4 500.5 486.6C500.7 488.8 501.6 491.9 502.7 493.2C503.8 494.5 505.6 495.0 507.1 494.3C508.6 493.6 510.4 491.2 511.5 488.8C512.6 486.4 513.3 481.5 513.7 480.0M511.5 509.0C511.7 507.9 511.7 504.6 512.6 502.0C513.5 499.4 515.4 496.0 517.0 493.2C518.7 490.5 520.7 487.7 522.5 485.5C524.3 483.3 527.1 480.9 528.0 480.0M517.0 509.0C517.7 507.5 519.9 501.9 521.4 499.8C522.9 497.7 523.6 497.1 525.8 496.5C528.0 496.0 531.5 496.3 534.6 496.5C537.7 496.7 541.9 497.4 544.5 497.6C547.1 497.8 549.1 497.6 550.0 497.6M528.0 480.0C529.1 480.7 532.2 483.1 534.6 484.4C537.0 485.7 539.7 487.0 542.3 487.7C544.9 488.4 548.7 488.6 550.0 488.8" stroke="#b08e52"/><path d="M462.0 509.0C462.9 507.9 465.1 504.1 467.5 502.0C469.9 499.9 473.4 498.7 476.3 496.5C479.2 494.3 482.5 490.2 485.1 488.8C487.7 487.4 489.7 487.7 491.7 488.3C493.7 488.8 495.6 489.8 497.2 492.1C498.9 494.4 500.7 499.2 501.6 502.0C502.5 504.8 502.5 507.9 502.7 509.0M474.1 509.0C474.5 508.2 475.4 505.1 476.3 504.2C477.2 503.3 478.7 503.3 479.6 503.7C480.5 504.0 481.3 505.5 481.8 506.4C482.4 507.3 482.7 508.6 482.9 509.0M492.8 509.0C493.0 508.5 493.4 506.4 493.9 505.9C494.5 505.3 495.6 505.3 496.1 505.9C496.7 506.4 497.0 508.5 497.2 509.0M530.2 509.0C531.7 508.2 536.4 505.2 539.0 504.2C541.6 503.2 543.8 503.2 545.6 503.1C547.4 503.0 549.3 503.6 550.0 503.7" stroke="#1d4576"/></g><g clip-path="url(#wc3)"><path d="M550.0 489.9C551.1 489.5 554.8 488.8 556.6 487.7C558.4 486.6 560.1 484.6 561.0 483.3C561.9 482.0 561.9 480.6 562.1 480.0M550.0 497.6C551.1 497.6 555.2 496.9 556.6 497.6C558.0 498.3 558.0 499.4 558.3 502.0C558.5 504.6 558.3 509.3 558.3 513.0C558.2 516.7 557.8 522.2 557.7 524.0M572.0 480.0C571.8 481.8 571.2 486.4 570.9 491.0C570.6 495.6 570.6 502.0 570.4 507.5C570.1 513.0 569.4 521.3 569.3 524.0M577.5 480.0C577.7 481.8 578.3 486.4 578.6 491.0C578.9 495.6 579.0 502.0 579.2 507.5C579.3 513.0 579.6 521.3 579.7 524.0M603.9 524.0C603.2 522.9 601.5 520.0 599.5 517.4C597.5 514.8 594.2 511.5 591.8 508.6C589.4 505.7 586.7 502.7 585.2 499.8C583.7 496.9 582.8 493.6 583.0 491.0C583.2 488.4 585.2 485.7 586.3 484.4C587.4 483.1 588.3 482.8 589.6 483.3C590.9 483.9 592.5 485.9 594.0 487.7C595.5 489.5 596.8 491.6 598.4 494.3C600.1 497.1 602.1 502.2 603.9 504.2C605.7 506.2 607.8 507.0 609.4 506.4C611.0 505.9 613.3 503.1 613.3 500.9C613.3 498.7 611.0 496.1 609.4 493.2C607.8 490.3 605.0 485.5 603.9 483.3C602.8 481.1 603.0 480.6 602.8 480.0M606.1 480.0C606.7 481.1 608.3 485.1 609.4 486.6C610.5 488.1 611.6 489.2 612.7 488.8C613.8 488.4 615.5 485.9 616.0 484.4C616.6 482.9 616.0 480.7 616.0 480.0M610.5 524.0C611.8 522.2 616.2 516.7 618.2 513.0C620.2 509.3 621.5 505.7 622.6 502.0C623.7 498.3 624.6 494.7 624.8 491.0C625.0 487.3 623.9 481.8 623.7 480.0M629.2 480.0C629.2 481.8 629.0 487.0 629.2 491.0C629.4 495.0 629.6 500.5 630.3 504.2C631.0 507.9 631.4 511.4 633.6 513.0C635.8 514.7 640.4 513.9 643.5 514.1C646.6 514.3 650.5 513.6 652.3 514.1C654.1 514.7 654.7 516.1 654.5 517.4C654.3 518.7 654.0 521.1 651.2 521.8C648.5 522.5 642.4 521.8 638.0 521.8C633.6 521.8 627.7 521.4 624.8 521.8C621.9 522.2 621.1 523.6 620.4 524.0M639.1 480.0C639.8 481.5 641.9 485.9 643.5 488.8C645.2 491.7 647.4 496.3 649.0 497.6C650.7 498.9 652.7 498.3 653.4 496.5C654.1 494.7 653.6 489.4 653.4 486.6C653.2 483.9 652.5 481.1 652.3 480.0M657.8 480.0C658.0 481.8 658.5 487.7 658.9 491.0C659.3 494.3 659.8 498.3 660.0 499.8M586.3 524.0C586.9 523.9 588.3 523.4 589.6 523.5C590.9 523.5 593.3 524.4 594.0 524.6" stroke="#b08e52"/></g><g clip-path="url(#wc4)"><path d="M665.5 431.3C665.3 432.6 664.2 437.0 664.4 439.0C664.6 441.0 665.5 443.1 666.6 443.4C667.7 443.8 669.7 442.7 671.0 441.2C672.3 439.7 673.6 436.3 674.3 434.6C675.1 433.0 675.2 431.9 675.4 431.3M660.0 448.9C660.4 449.3 662.0 450.2 662.2 451.1C662.4 452.0 661.5 453.8 661.1 454.4C660.7 455.1 660.2 454.9 660.0 455.0M688.6 431.3C687.5 432.8 684.6 437.0 682.0 440.1C679.5 443.2 676.0 446.9 673.2 450.0C670.5 453.1 667.7 456.5 665.5 458.8C663.3 461.2 660.9 463.4 660.0 464.3M700.7 431.3C700.7 432.0 699.8 434.4 700.7 435.7C701.7 437.0 703.5 437.9 706.3 439.0C709.0 440.1 714.1 441.2 717.3 442.3C720.4 443.4 723.5 444.2 725.0 445.6C726.4 447.1 726.4 449.7 726.1 451.1C725.7 452.6 725.0 454.3 722.8 454.4C720.6 454.5 716.0 452.8 712.9 451.7C709.7 450.6 707.2 449.2 704.1 447.8C700.9 446.4 696.5 443.8 694.1 443.4C691.8 443.1 691.2 444.3 689.7 445.6C688.3 446.9 687.5 448.2 685.3 451.1C683.1 454.1 677.4 460.8 676.5 463.2C675.6 465.7 678.0 464.9 679.8 466.0C681.7 467.1 685.9 468.5 687.5 469.9C689.2 471.2 689.9 473.0 689.7 474.3C689.6 475.5 688.5 477.2 686.4 477.6C684.4 477.9 680.4 477.0 677.6 476.5C674.9 475.9 671.6 473.5 669.9 474.3C668.3 475.0 668.2 478.9 667.7 480.9C667.3 482.8 667.3 485.2 667.2 486.0M710.7 431.3C710.8 432.0 710.3 434.4 711.8 435.7C713.2 437.0 716.5 437.9 719.5 439.0C722.4 440.1 727.2 440.8 729.4 442.3C731.6 443.8 732.1 445.4 732.7 447.8C733.2 450.2 732.5 453.9 732.7 456.6C732.9 459.4 733.1 462.7 733.8 464.3C734.5 466.0 736.0 466.7 737.1 466.5C738.2 466.4 739.7 465.1 740.4 463.2C741.1 461.4 741.5 458.7 741.5 455.5C741.5 452.4 740.9 448.0 740.4 444.5C739.9 441.0 739.1 436.8 738.7 434.6C738.4 432.4 738.3 431.9 738.2 431.3M686.4 451.1C688.1 451.7 692.9 453.1 696.3 454.4C699.8 455.7 703.9 457.6 707.4 458.8C710.8 460.1 714.0 461.0 717.3 462.1C720.6 463.2 725.3 464.2 727.2 465.4C729.0 466.7 728.6 468.6 728.3 469.9C727.9 471.1 726.4 472.8 725.0 473.2C723.5 473.5 721.5 473.3 719.5 472.1C717.5 470.8 714.9 467.3 712.9 465.4C710.8 463.6 708.8 461.4 707.4 461.0C705.9 460.7 704.2 461.6 704.1 463.2C703.9 464.9 705.2 468.6 706.3 471.0C707.4 473.3 709.2 475.0 710.7 477.6C712.1 480.1 714.3 484.6 715.1 486.0M685.3 453.3C685.5 454.6 685.3 459.0 686.4 461.0C687.5 463.1 689.7 464.0 691.9 465.4C694.1 466.9 698.0 468.2 699.6 469.9C701.3 471.5 702.2 473.5 701.9 475.4C701.5 477.2 698.5 479.1 697.4 480.9C696.3 482.6 695.6 485.2 695.2 486.0M725.0 431.3C725.5 431.5 727.2 432.4 728.3 432.4C729.4 432.4 731.0 431.5 731.6 431.3M751.4 435.7C751.2 437.2 750.5 440.3 750.3 444.5C750.1 448.7 750.5 456.3 750.3 461.0C750.1 465.8 750.5 470.6 749.2 473.2C747.9 475.7 745.5 475.5 742.6 476.5C739.7 477.4 734.5 477.9 731.6 478.7C728.6 479.4 726.4 479.6 725.0 480.9C723.5 482.1 723.1 485.2 722.8 486.0M751.4 435.7C752.0 436.4 753.4 437.7 754.7 440.1C756.0 442.5 758.0 446.5 759.1 450.0C760.2 453.5 761.0 457.4 761.3 461.0C761.7 464.7 761.7 468.7 761.3 472.1C761.0 475.4 759.9 478.5 759.1 480.9C758.4 483.2 757.3 485.2 756.9 486.0M765.7 431.3C766.1 433.0 767.2 438.1 767.9 441.2C768.6 444.3 769.7 448.6 770.0 450.0" stroke="#b08e52"/></g><g clip-path="url(#wc5)"><path d="M775.5 431.3C775.7 432.2 775.7 435.3 776.6 436.8C777.5 438.3 778.8 439.8 781.0 440.1C783.2 440.4 787.4 438.8 789.8 438.5C792.2 438.1 794.2 437.1 795.3 437.9C796.4 438.7 796.6 441.8 796.4 443.4C796.2 445.1 795.9 446.8 794.2 447.8C792.6 448.8 788.9 448.9 786.5 449.5C784.1 450.0 781.5 449.9 779.9 451.1C778.4 452.3 777.7 454.1 777.2 456.6C776.6 459.2 776.6 463.1 776.6 466.5C776.6 470.0 777.0 474.3 777.2 477.6C777.3 480.8 777.6 484.6 777.7 486.0M770.0 454.4C770.4 455.9 771.7 459.8 772.2 463.2C772.8 466.7 773.1 471.6 773.3 475.4C773.5 479.2 773.3 484.3 773.3 486.0M801.9 446.7C801.2 447.5 798.1 449.1 797.5 451.1C797.0 453.1 797.2 456.5 798.6 458.8C800.1 461.2 804.5 463.2 806.3 465.4C808.2 467.6 809.5 470.2 809.6 472.1C809.8 473.9 809.3 475.0 807.4 476.5C805.6 477.9 800.8 479.3 798.6 480.9C796.4 482.5 795.0 485.2 794.2 486.0M801.9 446.7C802.9 447.6 805.8 450.2 807.4 452.2C809.1 454.2 810.2 457.4 811.9 458.8C813.5 460.3 815.3 461.4 817.4 461.0C819.4 460.7 821.9 457.6 824.0 456.6C826.0 455.7 827.5 455.2 829.5 455.5C831.5 455.9 834.1 457.7 836.1 458.8C838.1 459.9 839.8 462.1 841.6 462.1C843.4 462.1 845.4 461.0 847.1 458.8C848.7 456.6 849.8 452.6 851.5 448.9C853.1 445.3 855.4 439.0 857.0 436.8C858.7 434.6 860.5 435.0 861.4 435.7C862.3 436.4 862.7 438.8 862.5 441.2C862.3 443.6 859.9 447.5 860.3 450.0C860.7 452.6 864.2 454.4 864.7 456.6C865.3 458.8 864.9 460.7 863.6 463.2C862.3 465.8 859.4 470.2 857.0 472.1C854.6 473.9 852.0 474.3 849.3 474.3C846.5 474.3 843.4 473.0 840.5 472.1C837.5 471.1 834.6 469.3 831.7 468.7C828.7 468.2 825.8 467.8 822.9 468.7C819.9 469.7 816.3 472.2 814.1 474.3C811.9 476.3 810.6 478.9 809.6 480.9C808.7 482.8 808.7 485.2 808.5 486.0M880.0 432.4C878.8 433.0 874.2 434.1 872.4 435.7C870.6 437.4 869.9 439.4 869.1 442.3C868.4 445.3 868.0 449.7 868.0 453.3C868.0 457.0 868.4 460.9 869.1 464.3C869.9 467.8 871.1 470.6 872.4 474.3C873.7 477.9 876.1 484.1 876.8 486.0" stroke="#b08e52"/><path d="M799.7 431.3C800.8 432.2 804.0 434.8 806.3 436.8C808.7 438.8 811.7 441.4 814.1 443.4C816.4 445.4 818.6 447.7 820.7 448.9C822.7 450.1 824.1 450.9 826.2 450.6C828.2 450.2 830.8 448.6 832.8 446.7C834.8 444.8 836.6 441.6 838.3 439.0C839.9 436.4 842.0 432.6 842.7 431.3M809.6 431.3C810.4 431.9 812.0 433.7 814.1 434.6C816.1 435.5 819.2 436.5 821.8 436.8C824.3 437.1 827.9 436.6 829.5 436.3C831.0 435.9 831.5 435.4 831.1 434.6C830.8 433.8 827.9 431.9 827.3 431.3" stroke="#2b8fc2"/><path d="M821.8 486.0C822.1 485.2 822.7 482.1 824.0 480.9C825.2 479.6 827.5 478.7 829.5 478.7C831.5 478.7 833.9 479.6 836.1 480.9C838.3 482.1 841.6 485.2 842.7 486.0M853.7 486.0C854.8 485.4 858.3 482.8 860.3 482.0C862.3 481.1 864.3 480.7 865.8 480.9C867.3 481.0 868.2 482.2 869.1 483.1C870.0 483.9 871.0 485.5 871.3 486.0" stroke="#aab6c4"/></g><g clip-path="url(#wc6)"><path d="M667.7 480.0C667.5 481.8 667.2 487.5 666.6 491.0C666.1 494.5 665.5 498.9 664.4 500.9C663.3 502.9 660.7 502.7 660.0 503.1M660.0 509.7C660.7 509.7 662.2 509.7 664.4 509.7C666.6 509.7 671.2 510.6 673.2 509.7C675.2 508.8 676.0 507.0 676.5 504.2C677.1 501.5 676.0 495.8 676.5 493.2C677.1 490.6 678.0 489.2 679.8 488.8C681.6 488.4 684.8 490.3 687.5 491.0C690.3 491.7 694.3 492.8 696.3 493.2C698.3 493.6 699.1 490.8 699.6 493.2C700.2 495.6 699.8 502.3 699.6 507.5C699.4 512.7 698.7 521.7 698.5 524.6M661.1 510.8C661.3 511.5 661.7 512.9 662.2 515.2C662.8 517.5 664.0 523.0 664.4 524.6M672.1 524.6C671.9 523.6 670.3 520.1 671.0 519.1C671.7 518.0 674.5 518.8 676.5 518.5C678.5 518.2 681.6 519.2 683.1 517.4C684.6 515.6 684.8 510.3 685.3 507.5C685.9 504.8 685.7 502.3 686.4 500.9C687.1 499.5 688.2 498.9 689.7 499.3C691.2 499.6 694.3 500.8 695.2 503.1C696.1 505.4 695.9 510.3 695.2 513.0C694.5 515.8 692.1 517.7 690.8 519.6C689.5 521.5 688.1 523.7 687.5 524.6M698.5 480.0C698.0 480.7 695.0 483.1 695.2 484.4C695.4 485.7 697.8 487.0 699.6 487.7C701.4 488.4 704.7 487.7 706.2 488.8C707.7 489.9 708.4 491.2 708.4 494.3C708.4 497.4 706.9 502.5 706.2 507.5C705.5 512.5 704.4 521.7 704.0 524.6M712.8 480.0C713.5 481.1 716.3 483.9 717.2 486.6C718.1 489.4 718.3 492.1 718.3 496.5C718.3 500.9 717.6 508.3 717.2 513.0C716.8 517.7 716.3 522.6 716.1 524.6M724.9 480.0C724.5 481.1 723.3 482.9 722.7 486.6C722.2 490.3 722.1 495.7 721.6 502.0C721.1 508.3 720.2 520.8 720.0 524.6M760.1 480.0C759.6 481.1 758.5 485.1 756.8 486.6C755.2 488.1 752.4 488.9 750.2 488.8C748.0 488.7 745.8 486.4 743.6 486.1C741.4 485.7 738.7 485.8 737.0 486.6C735.4 487.4 733.7 489.4 733.7 491.0C733.7 492.7 734.8 494.9 737.0 496.5C739.2 498.2 744.7 499.4 746.9 500.9C749.1 502.4 750.0 504.0 750.2 505.3C750.4 506.6 749.8 507.9 748.0 508.6C746.2 509.3 742.1 509.7 739.2 509.7C736.3 509.7 732.1 507.5 730.4 508.6C728.8 509.7 728.9 513.6 729.3 516.3C729.7 519.0 732.1 523.2 732.6 524.6M770.0 496.5C769.3 496.7 767.8 497.8 765.6 497.6C763.4 497.4 758.6 494.9 756.8 495.4C755.0 496.0 754.2 498.9 754.6 500.9C755.0 502.9 758.1 505.1 759.0 507.5C759.9 509.9 761.0 513.6 760.1 515.2C759.2 516.9 756.1 516.9 753.5 517.4C750.9 518.0 746.2 517.3 744.7 518.5C743.2 519.7 744.7 523.5 744.7 524.6M770.0 508.6C769.5 509.2 766.9 510.4 766.7 511.9C766.5 513.4 768.4 516.4 768.9 517.4C769.5 518.4 769.8 517.9 770.0 518.0" stroke="#b08e52"/></g><g clip-path="url(#wc7)"><path d="M776.6 480.0C776.7 481.8 777.2 487.7 777.2 491.0C777.2 494.3 777.2 497.2 776.6 499.8C776.0 502.4 774.4 505.1 773.3 506.4C772.2 507.7 770.6 507.3 770.0 507.5M800.8 480.0C799.9 480.7 796.2 482.6 795.3 484.4C794.4 486.2 794.6 488.6 795.3 491.0C796.0 493.4 797.9 496.1 799.7 498.7C801.5 501.3 803.9 504.2 806.3 506.4C808.7 508.6 812.0 511.5 814.0 511.9C816.0 512.3 817.9 510.3 818.4 508.6C819.0 507.0 818.4 504.6 817.3 502.0C816.2 499.4 813.3 495.8 811.8 493.2C810.3 490.6 808.9 488.8 808.5 486.6C808.1 484.4 809.4 481.1 809.6 480.0M770.0 518.5C770.7 518.9 773.1 519.7 774.4 520.7C775.7 521.7 777.2 523.9 777.7 524.6M792.0 524.6C791.1 523.2 788.0 518.8 786.5 516.3C785.0 513.8 783.0 511.2 783.2 509.7C783.4 508.2 785.8 507.5 787.6 507.5C789.4 507.5 792.2 508.1 794.2 509.7C796.2 511.4 797.9 515.2 799.7 517.4C801.5 519.6 803.2 522.4 805.2 522.9C807.2 523.5 810.3 521.4 811.8 520.7C813.3 520.0 813.5 517.9 814.0 518.5C814.6 519.1 814.9 523.5 815.1 524.6M874.5 480.0C875.1 481.1 876.9 484.8 877.8 486.6C878.7 488.4 879.6 490.3 880.0 491.0M880.0 496.5C879.3 496.1 876.9 494.3 875.6 494.3C874.3 494.3 872.7 494.9 872.3 496.5C871.9 498.2 872.5 501.6 873.4 504.2C874.3 506.8 876.7 510.1 877.8 511.9C878.9 513.7 879.6 514.7 880.0 515.2" stroke="#b08e52"/><path d="M821.7 480.0C821.7 480.7 820.6 482.6 821.7 484.4C822.8 486.2 825.9 488.6 828.3 491.0C830.7 493.4 834.7 496.9 836.0 498.7C837.3 500.5 837.5 500.4 836.0 502.0C834.5 503.7 829.4 506.4 827.2 508.6C825.0 510.8 823.2 512.8 822.8 515.2C822.4 517.6 823.9 521.4 825.0 522.9C826.1 524.4 827.2 524.7 829.4 524.0C831.6 523.3 835.5 520.2 838.2 518.5C841.0 516.9 843.3 513.9 845.9 514.1C848.5 514.3 851.6 517.9 853.6 519.6C855.6 521.3 857.3 523.7 858.0 524.6M834.9 480.0C835.8 480.7 838.4 482.9 840.4 484.4C842.4 485.9 844.4 488.8 847.0 488.8C849.6 488.8 852.9 485.5 855.8 484.4C858.7 483.3 862.2 482.0 864.6 482.2C867.0 482.4 869.4 483.9 870.1 485.5C870.8 487.2 870.5 489.9 869.0 492.1C867.5 494.3 863.0 497.1 861.3 498.7C859.7 500.4 858.9 500.5 859.1 502.0C859.3 503.5 860.8 505.3 862.4 507.5C864.1 509.7 867.5 512.8 869.0 515.2C870.5 517.6 871.2 520.2 871.2 521.8C871.2 523.4 869.4 524.1 869.0 524.6" stroke="#aab6c4"/></g><g clip-path="url(#wc8)"><path d="M317.1 27.0C317.3 30.4 317.9 42.1 318.1 47.1C318.4 52.2 319.1 54.7 318.6 57.2C318.1 59.7 317.2 61.0 315.1 62.2C313.0 63.4 308.6 63.7 306.0 64.2C303.5 64.7 301.0 65.1 300.0 65.2M300.0 74.3C301.0 73.4 304.0 70.4 306.0 69.3C308.0 68.1 310.2 67.1 312.1 67.2C313.9 67.4 315.9 68.1 317.1 70.3C318.3 72.4 318.8 78.4 319.1 80.0M340.2 27.0C338.1 29.0 329.4 35.7 327.2 39.1C324.9 42.4 326.5 43.3 326.7 47.1C326.8 51.0 327.8 56.7 328.2 62.2C328.5 67.7 328.6 77.1 328.7 80.0M352.3 27.0C351.1 28.5 347.8 33.4 345.3 36.1C342.8 38.7 339.4 40.4 337.2 43.1C335.0 45.8 333.4 49.0 332.2 52.2C331.0 55.3 330.6 57.6 330.2 62.2C329.8 66.9 329.8 77.1 329.7 80.0M361.4 27.0C360.2 28.7 355.7 34.4 354.3 37.1C353.0 39.7 352.3 42.3 353.3 43.1C354.3 43.9 358.9 41.6 360.4 42.1C361.9 42.6 362.9 44.6 362.4 46.1C361.9 47.6 359.9 49.8 357.3 51.1C354.8 52.5 349.8 52.8 347.3 54.2C344.8 55.5 343.3 57.0 342.3 59.2C341.2 61.4 340.7 65.2 341.2 67.2C341.8 69.3 342.8 70.6 345.3 71.3C347.8 71.9 353.7 70.8 356.3 71.3C359.0 71.8 360.4 72.8 361.4 74.3C362.4 75.7 362.2 79.1 362.4 80.0M373.4 80.0C374.3 77.9 376.5 70.2 378.5 67.2C380.5 64.3 382.7 62.9 385.5 62.2C388.4 61.5 393.1 62.5 395.6 63.2C398.1 63.9 399.8 65.7 400.6 66.2M385.5 80.0C386.4 79.4 388.9 76.3 390.5 76.3C392.2 76.3 394.7 79.4 395.6 80.0" stroke="#b08e52"/><path d="M305.0 27.0C305.0 29.0 304.9 35.0 305.0 39.1C305.2 43.1 305.2 48.3 306.0 51.1C306.9 54.0 308.9 55.8 310.1 56.2C311.2 56.5 312.6 55.5 313.1 53.2C313.6 50.8 313.6 46.5 313.1 42.1C312.6 37.7 310.6 29.5 310.1 27.0M364.4 27.0C364.2 28.3 363.2 32.9 363.4 35.0C363.5 37.2 363.9 39.9 365.4 40.1C366.9 40.2 369.9 37.1 372.4 36.1C374.9 35.0 378.6 33.7 380.5 34.0C382.3 34.4 383.5 36.2 383.5 38.1C383.5 39.9 383.0 42.9 380.5 45.1C378.0 47.3 372.4 49.0 368.4 51.1C364.4 53.3 359.2 56.2 356.3 58.2C353.5 60.2 351.1 61.7 351.3 63.2C351.5 64.7 354.8 66.6 357.3 67.2C359.9 67.9 363.2 68.6 366.4 67.2C369.6 65.9 373.1 62.2 376.5 59.2C379.8 56.2 383.3 52.0 386.5 49.1C389.7 46.3 393.2 43.3 395.6 42.1C397.9 40.9 399.8 42.1 400.6 42.1M387.5 27.0C388.4 27.8 390.4 31.4 392.6 32.0C394.7 32.7 399.3 31.2 400.6 31.0" stroke="#2b8fc2"/></g><g clip-path="url(#wc9)"><path d="M420.1 27.0C420.6 29.5 422.0 37.1 423.1 42.1C424.3 47.1 426.0 52.7 427.2 57.2C428.3 61.7 429.2 65.4 430.2 69.3C431.2 73.1 432.7 78.2 433.2 80.0M446.8 27.0C445.4 28.7 440.5 34.0 438.2 37.1C436.0 40.1 434.2 42.6 433.2 45.1C432.2 47.6 431.7 50.0 432.2 52.2C432.7 54.3 434.7 56.8 436.2 58.2C437.7 59.5 439.2 60.5 441.2 60.2C443.3 59.9 445.4 57.7 448.3 56.2C451.1 54.7 455.0 52.7 458.4 51.1C461.7 49.6 465.6 47.8 468.4 47.1C471.3 46.5 473.6 46.5 475.5 47.1C477.3 47.8 478.5 49.1 479.5 51.1C480.5 53.2 480.7 56.8 481.5 59.2C482.3 61.5 483.3 63.7 484.5 65.2C485.7 66.7 486.7 67.9 488.5 68.2C490.4 68.6 493.6 67.7 495.6 67.2C497.6 66.7 499.8 65.6 500.6 65.2M452.3 27.0C451.8 28.7 450.0 34.0 449.3 37.1C448.6 40.1 447.6 43.9 448.3 45.1C449.0 46.3 450.8 45.1 453.3 44.1C455.8 43.1 460.2 40.3 463.4 39.1C466.6 37.8 469.6 36.7 472.4 36.6C475.3 36.4 478.5 36.6 480.5 38.1C482.5 39.5 483.5 42.6 484.5 45.1C485.5 47.6 485.5 51.1 486.5 53.2C487.5 55.2 488.2 56.5 490.5 57.2C492.9 57.9 498.9 57.2 500.6 57.2M500.6 30.0C499.8 30.5 496.6 31.9 495.6 33.0C494.6 34.2 493.7 35.6 494.6 37.1C495.4 38.6 499.6 41.3 500.6 42.1M448.3 80.0C449.0 78.2 450.6 72.1 452.3 69.3C454.0 66.5 456.2 64.6 458.4 63.2C460.5 61.9 463.4 60.9 465.4 61.2C467.4 61.5 468.6 63.6 470.4 65.2C472.3 66.9 474.3 68.8 476.5 71.3C478.6 73.7 482.3 78.6 483.5 80.0M400.0 68.2C400.5 68.9 402.2 70.3 403.0 72.3C403.9 74.2 404.7 78.7 405.0 80.0M423.1 80.0C423.5 79.1 424.5 74.9 425.2 74.3C425.8 73.7 426.8 76.0 427.2 76.3" stroke="#b08e52"/><path d="M409.1 27.0C408.8 28.3 407.4 32.4 407.5 35.0C407.7 37.7 408.8 40.1 410.1 43.1C411.3 46.1 413.7 50.0 415.1 53.2C416.4 56.3 417.9 59.4 418.1 62.2C418.3 65.1 417.1 69.4 416.1 70.3C415.1 71.1 413.6 69.3 412.1 67.2C410.6 65.2 408.7 61.5 407.0 58.2C405.4 54.8 403.2 49.5 402.0 47.1C400.8 44.8 400.3 44.6 400.0 44.1M400.0 29.0C400.3 28.7 401.7 27.3 402.0 27.0" stroke="#2b8fc2"/><path d="M453.3 80.0C454.2 78.7 456.5 74.1 458.4 72.3C460.2 70.5 463.0 69.4 464.4 69.3C465.7 69.1 466.1 69.5 466.4 71.3C466.7 73.1 466.4 78.6 466.4 80.0" stroke="#aab6c4"/></g><g clip-path="url(#wc10)"><path d="M500.0 30.8C500.8 30.3 504.2 28.7 505.0 28.2M518.8 27.0C517.9 27.8 514.6 30.3 513.8 32.0C512.9 33.7 512.7 35.9 513.8 37.0C514.8 38.1 517.5 39.1 520.0 38.9C522.5 38.7 526.4 37.1 528.8 35.8C531.1 34.4 533.3 32.2 534.4 30.8C535.4 29.3 534.9 27.6 535.0 27.0M500.0 42.0C501.2 42.6 504.8 45.0 507.5 45.8C510.2 46.5 513.3 46.2 516.2 46.4C519.2 46.6 522.5 46.1 525.0 47.0C527.5 47.9 529.8 49.9 531.2 52.0C532.7 54.1 533.8 56.8 533.8 59.5C533.8 62.2 532.5 64.8 531.2 68.2C530.0 71.7 527.1 78.0 526.2 80.0M500.0 57.0C501.2 56.6 504.8 54.9 507.5 54.5C510.2 54.1 513.8 53.7 516.2 54.5C518.8 55.3 521.5 57.6 522.5 59.5C523.5 61.4 523.3 63.5 522.5 65.8C521.7 68.0 519.0 70.9 517.5 73.2C516.0 75.6 514.4 78.9 513.8 80.0M500.0 64.5C501.0 64.4 504.2 63.9 506.2 63.9C508.3 63.9 511.2 63.8 512.5 64.5C513.8 65.2 514.6 66.8 513.8 68.2C512.9 69.7 509.4 71.3 507.5 73.2C505.6 75.2 503.3 78.9 502.5 80.0M547.5 27.0C547.3 28.0 547.9 31.2 546.2 33.2C544.6 35.3 539.3 37.8 537.5 39.5C535.7 41.2 535.6 41.8 535.6 43.2C535.6 44.7 535.9 46.4 537.5 48.2C539.1 50.1 542.9 52.4 545.0 54.5C547.1 56.6 549.4 58.5 550.0 60.8C550.6 63.0 550.0 66.2 548.8 68.2C547.5 70.3 543.6 71.3 542.5 73.2C541.4 75.2 542.0 78.9 541.9 80.0M555.0 27.0C555.0 29.1 554.8 35.3 555.0 39.5C555.2 43.7 555.7 47.8 556.2 52.0C556.8 56.2 557.5 59.8 558.1 64.5C558.8 69.2 559.7 77.4 560.0 80.0M563.8 80.0C564.8 78.7 567.9 73.9 570.0 72.0C572.1 70.1 573.8 69.3 576.2 68.9C578.8 68.5 582.1 69.0 585.0 69.5C587.9 70.0 591.9 70.2 593.8 72.0C595.6 73.8 595.8 78.7 596.2 80.0" stroke="#b08e52"/><path d="M571.2 27.0C570.8 28.7 569.0 33.2 568.8 37.0C568.5 40.8 569.0 46.0 570.0 49.5C571.0 53.0 572.5 56.0 575.0 58.2C577.5 60.5 581.2 62.2 585.0 63.2C588.8 64.3 594.2 64.7 597.5 64.5C600.8 64.3 603.5 63.2 605.0 62.0C606.5 60.8 606.5 58.5 606.2 57.0C606.0 55.5 605.6 54.1 603.8 53.2C601.9 52.4 598.1 52.4 595.0 52.0C591.9 51.6 587.7 51.6 585.0 50.8C582.3 49.9 580.0 48.7 578.8 47.0C577.5 45.3 576.9 42.1 577.5 40.8C578.1 39.4 579.8 39.1 582.5 38.9C585.2 38.7 590.4 39.0 593.8 39.5C597.1 40.0 600.0 41.8 602.5 42.0C605.0 42.2 606.7 42.0 608.8 40.8C610.8 39.5 613.3 36.8 615.0 34.5C616.7 32.2 618.1 28.2 618.8 27.0M586.2 27.0C586.9 27.4 587.9 28.9 590.0 29.5C592.1 30.1 596.2 30.8 598.8 30.8C601.2 30.8 603.5 30.1 605.0 29.5C606.5 28.9 607.1 27.4 607.5 27.0M625.0 27.0C625.2 28.2 625.8 31.4 626.2 34.5C626.7 37.6 627.1 41.2 627.5 45.8C627.9 50.3 629.0 58.5 628.8 62.0C628.5 65.5 627.3 66.2 626.2 67.0C625.2 67.8 623.8 68.2 622.5 67.0C621.2 65.8 620.0 61.2 618.8 59.5C617.5 57.8 616.0 56.4 615.0 57.0C614.0 57.6 612.9 59.4 612.5 63.2C612.1 67.1 612.5 77.2 612.5 80.0M625.0 64.5C624.0 64.9 620.0 65.8 618.8 67.0C617.5 68.2 617.7 69.8 617.5 72.0C617.3 74.2 617.5 78.7 617.5 80.0" stroke="#2b8fc2"/></g><g clip-path="url(#wc11)"><path d="M632.5 27.0C632.8 30.1 633.9 39.9 634.4 45.8C634.9 51.6 635.1 58.2 635.6 62.0C636.1 65.8 635.1 66.9 637.5 68.2C639.9 69.6 645.4 70.1 650.0 70.1C654.6 70.1 661.8 69.3 665.0 68.2C668.2 67.2 669.4 65.4 669.4 63.9C669.4 62.3 667.6 60.4 665.0 58.9C662.4 57.3 657.3 56.1 653.8 54.5C650.2 52.9 646.2 51.4 643.8 49.5C641.2 47.6 639.5 45.8 638.8 43.2C638.0 40.8 638.3 37.2 639.4 34.5C640.4 31.8 644.1 28.2 645.0 27.0M685.0 27.0C684.8 28.7 684.6 34.3 683.8 37.0C682.9 39.7 681.2 42.2 680.0 43.2C678.8 44.3 678.1 44.3 676.2 43.2C674.4 42.2 671.2 38.8 668.8 37.0C666.2 35.2 664.0 33.2 661.2 32.6C658.5 32.0 655.0 32.3 652.5 33.2C650.0 34.2 646.9 36.6 646.2 38.2C645.6 39.9 646.9 41.7 648.8 43.2C650.6 44.8 654.2 46.3 657.5 47.6C660.8 49.0 665.4 50.0 668.8 51.4C672.1 52.7 675.3 54.1 677.5 55.8C679.7 57.4 679.8 59.9 681.9 61.4C684.0 62.8 687.4 63.4 690.0 64.5C692.6 65.6 695.8 65.7 697.5 68.2C699.2 70.8 699.6 78.0 700.0 80.0M671.2 27.0C671.5 27.8 671.9 30.8 672.5 32.0C673.1 33.2 674.0 34.5 675.0 34.5C676.0 34.5 678.1 33.2 678.8 32.0C679.4 30.8 678.8 27.8 678.8 27.0M702.5 27.0C703.5 28.2 707.5 32.0 708.8 34.5C710.0 37.0 710.2 39.1 710.0 42.0C709.8 44.9 708.3 50.5 707.5 52.0C706.7 53.5 706.0 52.8 705.0 50.8C704.0 48.7 702.3 42.6 701.2 39.5C700.2 36.4 699.8 33.0 698.8 32.0C697.7 31.0 696.2 31.6 695.0 33.2C693.8 34.9 691.7 38.9 691.2 42.0C690.8 45.1 691.2 48.9 692.5 52.0C693.8 55.1 696.2 58.7 698.8 60.8C701.2 62.8 704.0 64.1 707.5 64.5C711.0 64.9 716.7 63.7 720.0 63.2C723.3 62.8 726.0 61.6 727.5 62.0C729.0 62.4 729.6 64.5 728.8 65.8C727.9 67.0 725.6 68.5 722.5 69.5C719.4 70.5 713.1 71.2 710.0 72.0C706.9 72.8 705.0 73.2 703.8 74.5C702.5 75.8 702.7 79.1 702.5 80.0M712.5 27.0C712.7 28.0 712.1 31.8 713.8 33.2C715.4 34.7 719.0 35.5 722.5 35.8C726.0 36.0 730.4 34.8 735.0 34.5C739.6 34.2 747.5 34.0 750.0 33.9M750.0 39.5C748.3 39.3 743.5 38.0 740.0 38.2C736.5 38.5 731.9 39.3 728.8 40.8C725.6 42.2 722.5 45.1 721.2 47.0C720.0 48.9 719.6 51.4 721.2 52.0C722.9 52.6 727.9 51.2 731.2 50.8C734.6 50.3 739.0 49.1 741.2 49.5C743.5 49.9 744.6 51.8 745.0 53.2C745.4 54.7 745.2 56.8 743.8 58.2C742.3 59.7 737.9 60.5 736.2 62.0C734.6 63.5 733.5 65.1 733.8 67.0C734.0 68.9 735.6 71.8 737.5 73.2C739.4 74.7 742.9 74.6 745.0 75.8C747.1 76.9 749.2 79.3 750.0 80.0M647.5 80.0C648.5 79.1 651.2 75.3 653.8 74.5C656.2 73.7 659.8 74.2 662.5 75.1C665.2 76.0 668.8 79.2 670.0 80.0M672.5 80.0C672.9 78.5 673.5 72.5 675.0 70.8C676.5 69.0 679.6 69.1 681.2 69.5C682.9 69.9 684.2 71.5 685.0 73.2C685.8 75.0 686.0 78.9 686.2 80.0M625.0 75.8C625.6 75.6 627.7 74.4 628.8 75.1C629.8 75.8 630.8 79.2 631.2 80.0" stroke="#b08e52"/><path d="M625.0 27.0C625.4 27.8 626.7 28.9 627.5 32.0C628.3 35.1 629.4 40.8 630.0 45.8C630.6 50.8 631.5 58.5 631.2 62.0C631.0 65.5 629.8 66.2 628.8 67.0C627.7 67.8 625.6 67.0 625.0 67.0" stroke="#2b8fc2"/></g><g clip-path="url(#wc12)"><path d="M750.0 35.8C751.2 35.9 755.4 35.8 757.5 36.4C759.6 37.0 761.4 37.7 762.5 39.5C763.6 41.3 764.2 43.2 764.4 47.0C764.6 50.8 764.0 56.5 763.8 62.0C763.5 67.5 763.2 77.0 763.1 80.0M750.0 42.0C750.8 42.8 753.5 44.5 755.0 47.0C756.5 49.5 758.2 53.5 758.8 57.0C759.3 60.5 758.3 64.4 758.1 68.2C757.9 72.1 757.6 78.0 757.5 80.0M783.8 27.0C783.1 27.6 781.9 29.5 780.0 30.8C778.1 32.0 774.2 33.0 772.5 34.5C770.8 36.0 770.3 36.6 770.0 39.5C769.7 42.4 770.3 47.8 770.6 52.0C770.9 56.2 771.6 59.8 771.9 64.5C772.2 69.2 772.4 77.4 772.5 80.0M791.2 27.0C791.2 27.6 790.6 29.7 791.2 30.8C791.9 31.8 793.5 33.2 795.0 33.2C796.5 33.2 799.0 31.8 800.0 30.8C801.0 29.7 801.0 27.6 801.2 27.0M818.8 27.0C818.6 29.1 818.1 34.7 818.1 39.5C818.1 44.3 818.2 51.8 818.8 55.8C819.3 59.7 820.0 61.8 821.2 63.2C822.5 64.7 825.0 65.3 826.2 64.5C827.5 63.7 828.4 61.4 828.8 58.2C829.1 55.1 828.5 49.7 828.1 45.8C827.7 41.8 826.8 37.6 826.2 34.5C825.7 31.4 825.2 28.2 825.0 27.0M833.8 27.0C834.4 28.0 835.8 31.4 837.5 33.2C839.2 35.1 842.5 36.4 843.8 38.2C845.0 40.1 846.0 42.8 845.0 44.5C844.0 46.2 839.6 47.0 837.5 48.2C835.4 49.5 833.1 50.5 832.5 52.0C831.9 53.5 832.1 55.5 833.8 57.0C835.4 58.5 840.6 59.5 842.5 60.8C844.4 62.0 845.4 63.2 845.0 64.5C844.6 65.8 842.9 67.3 840.0 68.2C837.1 69.2 831.7 70.1 827.5 70.1C823.3 70.1 819.0 68.9 815.0 68.2C811.0 67.6 806.2 66.2 803.8 66.4C801.2 66.6 800.4 67.2 800.0 69.5C799.6 71.8 801.0 78.2 801.2 80.0M846.2 27.0C846.7 28.2 847.9 31.6 848.8 34.5C849.6 37.4 850.6 41.2 851.2 44.5C851.9 47.8 851.5 52.0 852.5 54.5C853.5 57.0 854.8 58.5 857.5 59.5C860.2 60.5 865.8 60.5 868.8 60.8C871.7 61.0 874.0 60.8 875.0 60.8M858.8 27.0C859.0 29.1 859.6 36.2 860.0 39.5C860.4 42.8 860.0 45.2 861.2 47.0C862.5 48.8 865.2 49.6 867.5 50.1C869.8 50.6 873.8 50.1 875.0 50.1M870.0 27.0C870.2 28.5 870.6 33.7 871.2 35.8C871.9 37.8 873.1 38.9 873.8 39.5C874.4 40.1 874.8 39.5 875.0 39.5M847.5 80.0C847.7 78.2 847.7 71.9 848.8 69.5C849.8 67.1 851.9 66.2 853.8 65.8C855.6 65.3 859.0 65.8 860.0 67.0C861.0 68.2 860.4 71.1 860.0 73.2C859.6 75.4 857.9 78.9 857.5 80.0" stroke="#b08e52"/><path d="M781.2 80.0C781.4 76.4 781.7 64.4 781.9 58.2C782.1 52.1 781.6 46.1 782.5 43.2C783.4 40.4 784.6 41.8 787.5 41.4C790.4 41.0 796.5 40.5 800.0 40.8C803.5 41.0 806.5 41.6 808.8 42.6C811.0 43.7 813.1 45.2 813.8 47.0C814.4 48.8 814.4 51.6 812.5 53.2C810.6 54.9 805.2 56.0 802.5 57.0C799.8 58.0 797.7 58.2 796.2 59.5C794.8 60.8 794.4 61.1 793.8 64.5C793.1 67.9 792.7 77.4 792.5 80.0" stroke="#aab6c4"/></g><g clip-path="url(#wc13)"><path d="M878.8 27.0C879.2 27.6 879.4 29.8 881.2 30.8C883.1 31.7 886.5 32.2 890.0 32.6C893.5 33.0 900.0 33.6 902.5 33.2C905.0 32.9 904.6 31.8 905.0 30.8C905.4 29.7 905.0 27.6 905.0 27.0M875.0 41.4C876.2 41.9 879.6 43.8 882.5 44.5C885.4 45.2 889.6 46.0 892.5 45.8C895.4 45.5 897.7 44.7 900.0 43.2C902.3 41.8 904.6 39.7 906.2 37.0C907.9 34.3 909.4 28.7 910.0 27.0M915.0 27.0C915.4 27.8 916.0 30.6 917.5 32.0C919.0 33.4 921.7 34.7 923.8 35.1C925.8 35.5 928.5 35.2 930.0 34.5C931.5 33.8 932.1 32.0 932.5 30.8C932.9 29.5 932.5 27.6 932.5 27.0M943.8 27.0C944.0 28.0 944.0 31.5 945.0 33.2C946.0 35.0 948.3 37.4 950.0 37.6C951.7 37.8 954.0 36.3 955.0 34.5C956.0 32.7 956.0 28.2 956.2 27.0M940.0 27.0C940.2 28.2 941.2 31.8 941.2 34.5C941.2 37.2 940.8 41.3 940.0 43.2C939.2 45.2 938.3 46.0 936.2 46.4C934.2 46.8 930.6 46.4 927.5 45.8C924.4 45.1 919.8 42.6 917.5 42.6C915.2 42.6 915.4 44.6 913.8 45.8C912.1 46.9 909.6 48.8 907.5 49.5C905.4 50.2 901.9 49.3 901.2 50.1C900.6 51.0 902.1 53.1 903.8 54.5C905.4 55.9 909.8 57.1 911.2 58.2C912.7 59.4 912.9 60.6 912.5 61.4C912.1 62.1 910.8 62.5 908.8 62.6C906.7 62.7 902.0 61.5 900.0 62.0C898.0 62.5 897.4 62.8 896.9 65.8C896.4 68.8 896.9 77.6 896.9 80.0M875.0 49.5C876.2 49.7 880.4 49.7 882.5 50.8C884.6 51.8 886.6 53.5 887.5 55.8C888.4 58.0 888.1 60.5 888.1 64.5C888.1 68.5 887.6 77.4 887.5 80.0M875.0 60.8C875.8 61.2 878.9 61.8 880.0 63.2C881.1 64.7 881.6 66.7 881.9 69.5C882.2 72.3 881.9 78.2 881.9 80.0" stroke="#b08e52"/><path d="M911.2 80.0C912.7 79.1 917.5 76.2 920.0 74.5C922.5 72.8 925.4 71.6 926.2 69.5C927.1 67.4 925.4 64.3 925.0 62.0C924.6 59.7 922.7 57.0 923.8 55.8C924.8 54.5 927.9 54.9 931.2 54.5C934.6 54.1 939.8 54.5 943.8 53.2C947.7 52.0 951.7 49.9 955.0 47.0C958.3 44.1 961.7 37.4 963.8 35.8C965.8 34.1 965.6 34.9 967.5 37.0C969.4 39.1 972.5 44.1 975.0 48.2C977.5 52.4 980.2 57.2 982.5 62.0C984.8 66.8 988.3 74.3 988.8 77.0C989.2 79.7 987.7 79.3 985.0 78.2C982.3 77.2 976.7 73.0 972.5 70.8C968.3 68.5 964.2 65.6 960.0 64.5C955.8 63.4 950.8 63.5 947.5 63.9C944.2 64.3 941.6 65.6 940.0 67.0C938.4 68.4 938.3 69.8 938.1 72.0C937.9 74.2 938.6 78.7 938.8 80.0M978.8 27.0C979.2 28.2 980.2 31.6 981.2 34.5C982.3 37.4 984.1 42.6 985.0 44.5C985.9 46.4 986.5 47.0 986.9 45.8C987.3 44.5 987.3 40.1 987.5 37.0C987.7 33.9 988.0 28.7 988.1 27.0" stroke="#2b8fc2"/></g></g></svg>

<!-- desktop icons -->
<svg class="a" style="left:0;top:28px" width="90" height="190" viewBox="0 28 90 190">
  <rect x="21.2" y="37.3" width="13" height="14.6" rx="0.6" fill="#2db872"/>
  <rect x="21.2" y="37.3" width="13" height="3.8" rx="0.6" fill="#cfcfcf"/>
  <path d="M22.5 38.6h10.4" stroke="#777" stroke-width="0.5"/>
  <g stroke="#ffffff" stroke-width="0.9" fill="none">
    <path d="M25.6 45.8l1.5-2.4 1.6 0.9M29.6 45.2l0.8 2.1-1.4 1.4M25.8 47.6l0.9 1.6h2"/>
  </g>
  <path d="M58.2 37.3h8.4l3.5 3.6v11.1h-11.9z" fill="#f2f2f2"/>
  <path d="M66.6 37.3v3.6h3.5z" fill="#c8c8c8"/>
  <path d="M64.2 42.3l4.1 4.1-4.1 4.1-4.1-4.1z" fill="#1d72e0"/>
  <path d="M65.6 44.5l-1.6 3.4" stroke="#fff" stroke-width="0.6"/>
  <rect x="22" y="73.9" width="12" height="14.6" rx="1.2" fill="#eeeeee"/>
  <rect x="22" y="73.9" width="12" height="7" rx="1.2" fill="#f6f6f6"/>
  <circle cx="28" cy="83.8" r="0.7" fill="#d0d0d0"/>
  <path d="M19.8 113.2h5.2l1.2 1.5h9.3v12.6h-15.7z" fill="#ddd0be"/>
  <rect x="19.8" y="115.5" width="15.7" height="11.8" fill="#ebe1d3"/>
  <path d="M25.4 122l2.3-2 2.3 2v2.5h-4.6z" fill="none" stroke="#8a7a6a" stroke-width="0.6"/>
  <circle cx="27.5" cy="156.7" r="7.6" fill="#8a93a6"/>
  <circle cx="27.5" cy="156.7" r="5.5" fill="#9ea6b6"/>
  <circle cx="27.5" cy="156.7" r="1.6" fill="#5a6070"/>
  <circle cx="27.5" cy="156.7" r="0.6" fill="#202430"/>
  <path d="M19.8 186.4h5.2l1.2 1.5h9.3v13.6h-15.7z" fill="#ddd0be"/>
  <rect x="19.8" y="188.7" width="15.7" height="12.8" fill="#ebe1d3"/>
</svg>
<div class="t" style="left:13px;top:55.8px;font-size:10.20px;color:#e2e2e2;transform:scale(0.5);transform-origin:0 0">Wastebasket</div>
<div class="t" style="left:52.2px;top:55.8px;font-size:10.20px;color:#e2e2e2;transform:scale(0.5);transform-origin:0 0">nvidia-top</div>
<div class="t" style="left:14px;top:93px;font-size:10.20px;color:#e2e2e2;transform:scale(0.5);transform-origin:0 0">File System</div>
<div class="t" style="left:21.4px;top:130.8px;font-size:10.20px;color:#e2e2e2;transform:scale(0.5);transform-origin:0 0">Home</div>
<div class="t" style="left:22px;top:167.9px;font-size:10.20px;color:#e2e2e2;transform:scale(0.5);transform-origin:0 0">boot</div>
<div class="t" style="left:20px;top:204.6px;font-size:10.20px;color:#e2e2e2;transform:scale(0.5);transform-origin:0 0">firefox</div>
<!-- noVNC handle -->
<div class="a" style="left:0;top:237px;width:5.2px;height:17.6px;background:#5a6682;border-radius:0 1.5px 1.5px 0"></div>
<div class="a" style="left:2px;top:244.6px;width:1.4px;height:2.6px;background:#ffffff;border-radius:0.5px"></div>

<!-- ============ terminal ============ -->
<div class="a" style="left:7.5px;top:352px;width:434px;height:159px;background:#f4f4f4;border:0.5px solid #d0d0d0"></div>
<div class="a" style="left:8px;top:361.5px;width:433px;height:9px;background:#f2f2f2"></div>
<div class="a" style="left:8.2px;top:370.5px;width:426.6px;height:138px;background:#000"></div>
<div class="a" style="left:435px;top:370.5px;width:6px;height:138px;background:#f0f0f0"></div>
<div class="a" style="left:436.8px;top:487px;width:2.4px;height:21px;background:#c8c8c8;border-radius:1px"></div>
<svg class="a" style="left:9px;top:353.5px" width="8" height="8">
  <rect x="0" y="0" width="7.2" height="7" fill="#2e4556"/>
  <path d="M1.2 1.5v2.2h2.3" stroke="#e8e8e8" stroke-width="0.7" fill="none"/>
  <path d="M3.5 4.8h2.6" stroke="#e8e8e8" stroke-width="0.7"/>
</svg>
<div class="t" style="left:180px;top:355.4px;font-size:9.90px;font-weight:bold;color:#8a8a8a;transform:scale(0.5);transform-origin:0 0">Terminal -</div>
<div class="a" style="left:204px;top:354.4px;width:14.7px;height:6px;background:#e0e0e0"></div>
<div class="t" style="left:218.7px;top:355.4px;font-size:9.90px;font-weight:bold;color:#8a8a8a;transform:scale(0.5);transform-origin:0 0">@gpu002:~</div>
<div class="t" style="left:11px;top:363.6px;font-size:10.20px;color:#9a9a9a;word-spacing:0;transform:scale(0.5);transform-origin:0 0">File</div>
<div class="t" style="left:25px;top:363.6px;font-size:10.20px;color:#9a9a9a;transform:scale(0.5);transform-origin:0 0">Edit</div>
<div class="t" style="left:39.6px;top:363.6px;font-size:10.20px;color:#9a9a9a;transform:scale(0.5);transform-origin:0 0">View</div>
<div class="t" style="left:56px;top:363.6px;font-size:10.20px;color:#9a9a9a;transform:scale(0.5);transform-origin:0 0">Terminal</div>
<div class="t" style="left:81.5px;top:363.6px;font-size:10.20px;color:#9a9a9a;transform:scale(0.5);transform-origin:0 0">Tabs</div>
<div class="t" style="left:97px;top:363.6px;font-size:10.20px;color:#9a9a9a;transform:scale(0.5);transform-origin:0 0">Help</div>
<div class="t" style="left:8.6px;top:371.2px;font-family:'Liberation Mono',monospace;font-size:5.6px;transform:scale(0.74,1);transform-origin:0 0;color:#ececec;font-weight:bold;will-change:auto">(OSS 2410.0) <span style="color:transparent">XXXXXXXX</span>u002<span style="color:#e03030">(comet)</span> ~]$ runwb2</div>
<div class="a" style="left:41px;top:371.6px;width:20.4px;height:4.6px;background:#8a8a8a"></div>
<div class="t" style="left:8.6px;top:386.4px;font-family:'Liberation Mono',monospace;font-size:5.6px;transform:scale(0.74,1);transform-origin:0 0;color:#ececec;font-weight:bold;will-change:auto">run_mono /opt/software/ansys/v2025R1/v251/Framework/bin/Linux64/AnsysFW.exe</div>
<div class="a" style="left:8.6px;top:390.6px;width:3px;height:5.2px;border:0.45px solid #c8c8c8"></div>

<!-- ============ workbench ============ -->
<!-- WB window -->
<div class="a" style="left:294.2px;top:78px;width:610.5px;height:352.5px;background:#f0f0f0;border:0.8px solid #c4c4c4;border-radius:2px 2px 0 0"></div>
<div class="a" style="left:293.9px;top:80px;width:0.9px;height:350.5px;background:#8c8c8c"></div>
<div class="a" style="left:295px;top:78.8px;width:609px;height:9px;background:#f7f7f7;border-radius:2px 2px 0 0"></div>
<svg class="a" style="left:296px;top:79px" width="8.2" height="8.2">
  <rect width="8.2" height="8.2" fill="#111"/>
  <path d="M4.1 0.8l2.6 2.5-2.6 2.6-2.6-2.6z" fill="#d09020"/>
  <path d="M2.6 3.3h3M4.1 1.8v3" stroke="#f0c050" stroke-width="0.6"/>
  <rect x="1.5" y="6.2" width="5.2" height="1.2" fill="#cfcfcf"/>
</svg>
<div class="t" style="left:552.5px;top:80.6px;font-size:9.94px;font-weight:bold;color:#8c8c8c;transform:scale(0.5);transform-origin:0 0">Unsaved Project - Workbench</div>
<svg class="a" style="left:870px;top:79px" width="34" height="9">
  <g stroke="#a4a4a4" stroke-width="0.65" fill="none">
    <path d="M3.6 5.6l1.8-1.9 1.8 1.9" fill="#a4a4a4"/>
    <path d="M11.2 5.6h3.7"/>
    <rect x="19.3" y="2.6" width="3.4" height="3.3"/>
    <path d="M27.8 2.6l3.5 3.3M31.3 2.6l-3.5 3.3"/>
  </g>
</svg>
<!-- menu band -->
<div class="a" style="left:295px;top:87.8px;width:608px;height:7px;background:#ebebeb"></div>
<div class="t" style="left:299.1px;top:89.1px;font-size:8.70px;color:#303030;transform:scale(0.5);transform-origin:0 0"><u>F</u>ile</div>
<div class="t" style="left:311.1px;top:89.1px;font-size:8.70px;color:#303030;transform:scale(0.5);transform-origin:0 0"><u>V</u>iew</div>
<div class="t" style="left:325.2px;top:89.1px;font-size:8.70px;color:#303030;transform:scale(0.5);transform-origin:0 0"><u>T</u>ools</div>
<div class="t" style="left:339.9px;top:89.1px;font-size:8.70px;color:#303030;transform:scale(0.5);transform-origin:0 0"><u>U</u>nits</div>
<div class="t" style="left:355px;top:89.1px;font-size:8.70px;color:#303030;transform:scale(0.5);transform-origin:0 0">E<u>x</u>tensions</div>
<div class="t" style="left:380.8px;top:89.1px;font-size:8.70px;color:#303030;transform:scale(0.5);transform-origin:0 0"><u>J</u>obs</div>
<div class="t" style="left:394px;top:89.1px;font-size:8.70px;color:#303030;transform:scale(0.5);transform-origin:0 0"><u>H</u>elp</div>
<!-- toolbar 1 -->
<div class="a" style="left:295px;top:94.8px;width:608px;height:12.4px;background:linear-gradient(#f8f8f8,#f0f0f0)"></div>
<div class="a" style="left:295px;top:107px;width:608px;height:0.7px;background:#c8c8c8"></div>
<svg class="a" style="left:296px;top:96px" width="52" height="10">
  <rect x="2" y="2" width="0.6" height="6" fill="#ddd"/>
  <path d="M7.3 3.5h3.5l0.8 1h1.6v4.8h-5.9z" fill="#e8c050"/>
  <circle cx="10.8" cy="6.6" r="2.2" fill="#2aa0d0"/><circle cx="10.8" cy="6.6" r="1" fill="#30b050"/>
  <path d="M11 2.4l1.8-0.8" stroke="#e03030" stroke-width="0.7"/>
  <rect x="19" y="2.2" width="4.6" height="5" fill="#6a6ad8"/><rect x="20" y="2.2" width="2.6" height="2" fill="#c8c8f0"/>
  <circle cx="22.4" cy="7" r="2" fill="#2aa0d0"/><circle cx="22.6" cy="7.2" r="0.9" fill="#30b050"/>
  <rect x="30.7" y="2.2" width="4.6" height="5" fill="#8a7ae0"/><path d="M32 2.3l2.5-0.6" stroke="#e03030" stroke-width="0.8"/>
  <circle cx="33.6" cy="7" r="2" fill="#2aa0d0"/><circle cx="33.8" cy="7.2" r="0.9" fill="#30b050"/>
  <circle cx="45" cy="5.3" r="2.8" fill="#9a9a9a"/><circle cx="45" cy="4.6" r="1.6" fill="#d0d0d0"/>
</svg>
<!-- toolbar 2 -->
<div class="a" style="left:295px;top:107.7px;width:608px;height:9.6px;background:#eeeeee"></div>
<div class="a" style="left:295px;top:117.2px;width:608px;height:0.7px;background:#c8c8c8"></div>
<svg class="a" style="left:296px;top:108px" width="72" height="10">
  <path d="M2.8 2.4h3l1 1v4.8h-4z" fill="#f8f8f0" stroke="#a0b0c8" stroke-width="0.4"/><circle cx="3.2" cy="2.6" r="1.1" fill="#f0d040"/>
  <path d="M11.5 4h3.2l0.6 0.8h1.8v3.4h-5.6z" fill="#e8b840"/><path d="M15 2.8l1.5-0.8" stroke="#e04040" stroke-width="0.6"/>
  <rect x="20.4" y="2.3" width="5.2" height="5.3" fill="#5a5ad0"/><rect x="21.4" y="2.3" width="3" height="2" fill="#d8d8f8"/><rect x="22" y="5.3" width="1.6" height="2" fill="#2a2a80"/>
  <rect x="29.2" y="2.3" width="5.4" height="5.3" fill="#5a6ad0"/><path d="M30 7.3l2-2.5 2.2 2.6" stroke="#e0c040" stroke-width="0.7" fill="none"/>
  <!-- tab -->
  <path d="M37.2 9.4L41.6 1.2h22.8l4.4 8.2z" fill="#fafafa" stroke="#cfcfcf" stroke-width="0.5"/>
  <rect x="43.2" y="2.4" width="5.2" height="5.2" fill="#fcfcfc" stroke="#b8b8b8" stroke-width="0.4"/><rect x="47" y="3.2" width="0.6" height="3.4" fill="#c0c0c0"/>
</svg>
<div class="t" style="left:346px;top:111px;font-size:8.74px;color:#2a2a2a;transform:scale(0.5);transform-origin:0 0">Project</div>
<!-- toolbar 3 -->
<div class="a" style="left:295px;top:117.9px;width:608px;height:13.3px;background:#efefef"></div>
<svg class="a" style="left:296px;top:120px" width="172" height="9">
  <rect x="3" y="3.2" width="1.8" height="4" fill="#4a6ad0"/><rect x="5.1" y="1.6" width="1.8" height="5.6" fill="#c04040"/><rect x="7" y="2.6" width="1.5" height="4.6" fill="#3a5ac0"/>
  <path d="M37.5 3.5h2.2M38.6 2.3l1.2 1.2-1.2 1.2M40.8 3.8v3.2M41.5 3.8v3.2" stroke="#808080" stroke-width="0.5" fill="none"/>
  <rect x="73.4" y="1.8" width="4" height="5.5" fill="#f8f8f8" stroke="#909090" stroke-width="0.4"/><path d="M74.3 4.5h2.2" stroke="#7a7a7a" stroke-width="0.4"/>
  <path d="M119.5 7.2l2.6-5" stroke="#a0a0a0" stroke-width="0.6"/>
  <rect x="164.8" y="1.6" width="2" height="2.4" fill="#404040"/><rect x="167.2" y="1.6" width="2" height="2.4" fill="#404040"/><rect x="164.8" y="4.6" width="2" height="2.4" fill="#404040"/><rect x="167.2" y="4.6" width="2" height="2.4" fill="#404040"/>
</svg>
<div class="t" style="left:304.8px;top:122.1px;font-size:8.60px;color:#2a2a2a;transform:scale(0.5);transform-origin:0 0">Import...</div>
<div class="t" style="left:338.8px;top:122.1px;font-size:8.60px;color:#2a2a2a;transform:scale(0.5);transform-origin:0 0">Reconnect</div>
<div class="t" style="left:375.1px;top:122.1px;font-size:8.60px;color:#2a2a2a;transform:scale(0.5);transform-origin:0 0">Refresh Project</div>
<div class="t" style="left:420px;top:122.1px;font-size:8.60px;color:#2a2a2a;transform:scale(0.5);transform-origin:0 0">Update Project</div>
<div class="t" style="left:467.1px;top:122.1px;font-size:8.40px;color:#2a2a2a;transform:scale(0.5);transform-origin:0 0">ACT Start Page</div>

<!-- toolbox panel -->
<div class="a" style="left:295.5px;top:131.4px;width:56.5px;height:286.5px;background:#ffffff"></div>
<div class="a" style="left:296.1px;top:131.5px;width:54.6px;height:6.3px;background:linear-gradient(#b8b8b8,#a2a2a2)"></div>
<div class="t" style="left:297.8px;top:132.9px;font-size:9.20px;color:#ececec;transform:scale(0.5);transform-origin:0 0">Toolbox</div>
<svg class="a" style="left:333px;top:131.5px" width="18" height="6.3">
  <path d="M0.8 2.4h2.8l-1.4 1.6z" fill="#3a50b0"/>
  <circle cx="8.6" cy="2.6" r="1.1" fill="none" stroke="#303030" stroke-width="0.6"/><path d="M8.6 3.7v1.6" stroke="#303030" stroke-width="0.6"/>
  <path d="M13.3 1.8l2.4 2.6M15.7 1.8l-2.4 2.6" stroke="#303030" stroke-width="0.7"/>
</svg>
<div class="a" style="left:296.4px;top:138.5px;width:54.3px;height:7px;background:linear-gradient(#f8f8f8,#e4e4e4 40%,#c4c4c4);border:0.5px solid #b4b4b4;border-radius:0.6px"></div>
<div class="a" style="left:298.2px;top:140.1px;width:3.4px;height:3.4px;border:0.5px solid #7a7a7a;background:#d4d4d4"></div>
<div class="t" style="left:303.1px;top:140.4px;font-size:8.60px;color:#303030;transform:scale(0.5);transform-origin:0 0">Analysis Systems</div>
<div class="a" style="left:296px;top:146px;width:55px;height:196px;overflow:hidden">
<div style="position:absolute;left:-296px;top:-146px;width:1000px;height:527px">
<div class="a" style="left:298.9px;top:146.20px;width:5.8px;height:5.4px;background:#e6c23c;border-radius:1.1px"></div>
<div class="a" style="left:300.2px;top:147.40px;width:3.2px;height:3px;background:#8e9ab8;opacity:.9;border-radius:0.4px"></div>
<div class="t" style="left:305.9px;top:147.25px;font-size:8.60px;color:#2a2a2a;transform:scale(0.5);transform-origin:0 0">Coupled Field Harmonic</div>
<div class="a" style="left:298.9px;top:152.52px;width:5.8px;height:5.4px;background:#e6c23c;border-radius:1.1px"></div>
<div class="a" style="left:300.2px;top:153.72px;width:3.2px;height:3px;background:#8e9ab8;opacity:.9;border-radius:0.4px"></div>
<div class="t" style="left:305.9px;top:153.57px;font-size:8.60px;color:#2a2a2a;transform:scale(0.5);transform-origin:0 0">Coupled Field Modal</div>
<div class="a" style="left:298.9px;top:158.84px;width:5.8px;height:5.4px;background:#e6c23c;border-radius:1.1px"></div>
<div class="a" style="left:300.2px;top:160.04px;width:3.2px;height:3px;background:#8e9ab8;opacity:.9;border-radius:0.4px"></div>
<div class="t" style="left:305.9px;top:159.89px;font-size:8.60px;color:#2a2a2a;transform:scale(0.5);transform-origin:0 0">Coupled Field Static</div>
<div class="a" style="left:298.9px;top:165.16px;width:5.8px;height:5.4px;background:#e6c23c;border-radius:1.1px"></div>
<div class="a" style="left:300.2px;top:166.36px;width:3.2px;height:3px;background:#8e9ab8;opacity:.9;border-radius:0.4px"></div>
<div class="t" style="left:305.9px;top:166.21px;font-size:8.60px;color:#2a2a2a;transform:scale(0.5);transform-origin:0 0">Coupled Field Transient</div>
<div class="a" style="left:298.9px;top:171.48px;width:5.8px;height:5.4px;background:#4fae2e;border-radius:1.1px"></div>
<div class="a" style="left:300.2px;top:172.68px;width:3.2px;height:3px;background:#9ad870;opacity:.9;border-radius:0.4px"></div>
<div class="t" style="left:305.9px;top:172.53px;font-size:8.60px;color:#2a2a2a;transform:scale(0.5);transform-origin:0 0">Eigenvalue Buckling</div>
<div class="a" style="left:298.9px;top:177.80px;width:5.8px;height:5.4px;background:#c89a3a;border-radius:1.1px"></div>
<div class="a" style="left:300.2px;top:179.00px;width:3.2px;height:3px;background:#e8c070;opacity:.9;border-radius:0.4px"></div>
<div class="t" style="left:305.9px;top:178.85px;font-size:8.60px;color:#2a2a2a;transform:scale(0.5);transform-origin:0 0">Electric</div>
<div class="a" style="left:298.9px;top:184.12px;width:5.8px;height:5.4px;background:#4fae2e;border-radius:1.1px"></div>
<div class="a" style="left:300.2px;top:185.32px;width:3.2px;height:3px;background:#9ad870;opacity:.9;border-radius:0.4px"></div>
<div class="t" style="left:305.9px;top:185.17px;font-size:8.60px;color:#2a2a2a;transform:scale(0.5);transform-origin:0 0">Explicit Dynamics</div>
<div class="a" style="left:298.9px;top:190.44px;width:5.8px;height:5.4px;background:#2ea6a6;border-radius:1.1px"></div>
<div class="a" style="left:300.2px;top:191.64px;width:3.2px;height:3px;background:#bfe6e6;opacity:.9;border-radius:0.4px"></div>
<div class="t" style="left:305.9px;top:191.49px;font-size:8.60px;color:#2a2a2a;transform:scale(0.5);transform-origin:0 0">Fluid Flow (CFX)</div>
<div class="a" style="left:298.9px;top:196.76px;width:5.8px;height:5.4px;background:#2ea6a6;border-radius:1.1px"></div>
<div class="a" style="left:300.2px;top:197.96px;width:3.2px;height:3px;background:#bfe6e6;opacity:.9;border-radius:0.4px"></div>
<div class="t" style="left:305.9px;top:197.81px;font-size:8.60px;color:#2a2a2a;transform:scale(0.5);transform-origin:0 0">Fluid Flow (Fluent with Rigid Body)</div>
<div class="a" style="left:298.9px;top:203.08px;width:5.8px;height:5.4px;background:#2ea6a6;border-radius:1.1px"></div>
<div class="a" style="left:300.2px;top:204.28px;width:3.2px;height:3px;background:#bfe6e6;opacity:.9;border-radius:0.4px"></div>
<div class="t" style="left:305.9px;top:204.13px;font-size:8.60px;color:#2a2a2a;transform:scale(0.5);transform-origin:0 0">Fluid Flow (Fluent)</div>
<div class="a" style="left:298.9px;top:209.40px;width:5.8px;height:5.4px;background:#2ea6a6;border-radius:1.1px"></div>
<div class="a" style="left:300.2px;top:210.60px;width:3.2px;height:3px;background:#bfe6e6;opacity:.9;border-radius:0.4px"></div>
<div class="t" style="left:305.9px;top:210.45px;font-size:8.60px;color:#2a2a2a;transform:scale(0.5);transform-origin:0 0">Fluid Flow (Polyflow Classic)</div>
<div class="a" style="left:298.9px;top:215.72px;width:5.8px;height:5.4px;background:#9a52c2;border-radius:1.1px"></div>
<div class="a" style="left:300.2px;top:216.92px;width:3.2px;height:3px;background:#d8b0ea;opacity:.9;border-radius:0.4px"></div>
<div class="t" style="left:305.9px;top:216.77px;font-size:8.60px;color:#2a2a2a;transform:scale(0.5);transform-origin:0 0">Harmonic Acoustics</div>
<div class="a" style="left:298.9px;top:222.04px;width:5.8px;height:5.4px;background:#4fae2e;border-radius:1.1px"></div>
<div class="a" style="left:300.2px;top:223.24px;width:3.2px;height:3px;background:#9ad870;opacity:.9;border-radius:0.4px"></div>
<div class="t" style="left:305.9px;top:223.09px;font-size:8.60px;color:#2a2a2a;transform:scale(0.5);transform-origin:0 0">Harmonic Response</div>
<div class="a" style="left:298.9px;top:228.36px;width:5.8px;height:5.4px;background:#4fae2e;border-radius:1.1px"></div>
<div class="a" style="left:300.2px;top:229.56px;width:3.2px;height:3px;background:#9ad870;opacity:.9;border-radius:0.4px"></div>
<div class="t" style="left:305.9px;top:229.41px;font-size:8.60px;color:#2a2a2a;transform:scale(0.5);transform-origin:0 0">LS-DYNA</div>
<div class="a" style="left:298.9px;top:234.68px;width:5.8px;height:5.4px;background:#9a52c2;border-radius:1.1px"></div>
<div class="a" style="left:300.2px;top:235.88px;width:3.2px;height:3px;background:#d8b0ea;opacity:.9;border-radius:0.4px"></div>
<div class="t" style="left:305.9px;top:235.73px;font-size:8.60px;color:#2a2a2a;transform:scale(0.5);transform-origin:0 0">LS-DYNA Acoustics</div>
<div class="a" style="left:298.9px;top:241.00px;width:5.8px;height:5.4px;background:#4fae2e;border-radius:1.1px"></div>
<div class="a" style="left:300.2px;top:242.20px;width:3.2px;height:3px;background:#9ad870;opacity:.9;border-radius:0.4px"></div>
<div class="t" style="left:305.9px;top:242.05px;font-size:8.60px;color:#2a2a2a;transform:scale(0.5);transform-origin:0 0">LS-DYNA Restart</div>
<div class="a" style="left:298.9px;top:247.32px;width:5.8px;height:5.4px;background:#c89a3a;border-radius:1.1px"></div>
<div class="a" style="left:300.2px;top:248.52px;width:3.2px;height:3px;background:#e8c070;opacity:.9;border-radius:0.4px"></div>
<div class="t" style="left:305.9px;top:248.37px;font-size:8.60px;color:#2a2a2a;transform:scale(0.5);transform-origin:0 0">Magnetostatic</div>
<div class="a" style="left:298.9px;top:253.64px;width:5.8px;height:5.4px;background:#4fae2e;border-radius:1.1px"></div>
<div class="a" style="left:300.2px;top:254.84px;width:3.2px;height:3px;background:#9ad870;opacity:.9;border-radius:0.4px"></div>
<div class="t" style="left:305.9px;top:254.69px;font-size:8.60px;color:#2a2a2a;transform:scale(0.5);transform-origin:0 0">Modal</div>
<div class="a" style="left:298.9px;top:259.96px;width:5.8px;height:5.4px;background:#9a52c2;border-radius:1.1px"></div>
<div class="a" style="left:300.2px;top:261.16px;width:3.2px;height:3px;background:#d8b0ea;opacity:.9;border-radius:0.4px"></div>
<div class="t" style="left:305.9px;top:261.01px;font-size:8.60px;color:#2a2a2a;transform:scale(0.5);transform-origin:0 0">Modal Acoustics</div>
<div class="a" style="left:298.9px;top:266.28px;width:5.8px;height:5.4px;background:#4fae2e;border-radius:1.1px"></div>
<div class="a" style="left:300.2px;top:267.48px;width:3.2px;height:3px;background:#9ad870;opacity:.9;border-radius:0.4px"></div>
<div class="t" style="left:305.9px;top:267.33px;font-size:8.60px;color:#2a2a2a;transform:scale(0.5);transform-origin:0 0">Random Vibration</div>
<div class="a" style="left:298.9px;top:272.60px;width:5.8px;height:5.4px;background:#4fae2e;border-radius:1.1px"></div>
<div class="a" style="left:300.2px;top:273.80px;width:3.2px;height:3px;background:#9ad870;opacity:.9;border-radius:0.4px"></div>
<div class="t" style="left:305.9px;top:273.65px;font-size:8.60px;color:#2a2a2a;transform:scale(0.5);transform-origin:0 0">Response Spectrum</div>
<div class="a" style="left:298.9px;top:278.92px;width:5.8px;height:5.4px;background:#4fae2e;border-radius:1.1px"></div>
<div class="a" style="left:300.2px;top:280.12px;width:3.2px;height:3px;background:#9ad870;opacity:.9;border-radius:0.4px"></div>
<div class="t" style="left:305.9px;top:279.97px;font-size:8.60px;color:#2a2a2a;transform:scale(0.5);transform-origin:0 0">Rigid Dynamics</div>
<div class="a" style="left:298.9px;top:285.24px;width:5.8px;height:5.4px;background:#9a52c2;border-radius:1.1px"></div>
<div class="a" style="left:300.2px;top:286.44px;width:3.2px;height:3px;background:#d8b0ea;opacity:.9;border-radius:0.4px"></div>
<div class="t" style="left:305.9px;top:286.29px;font-size:8.60px;color:#2a2a2a;transform:scale(0.5);transform-origin:0 0">Static Acoustics</div>
<div class="a" style="left:298.9px;top:291.56px;width:5.8px;height:5.4px;background:#4fae2e;border-radius:1.1px"></div>
<div class="a" style="left:300.2px;top:292.76px;width:3.2px;height:3px;background:#9ad870;opacity:.9;border-radius:0.4px"></div>
<div class="t" style="left:305.9px;top:292.61px;font-size:8.60px;color:#2a2a2a;transform:scale(0.5);transform-origin:0 0">Static Structural</div>
<div class="a" style="left:298.9px;top:297.88px;width:5.8px;height:5.4px;background:#d2442a;border-radius:1.1px"></div>
<div class="a" style="left:300.2px;top:299.08px;width:3.2px;height:3px;background:#f0f0f0;opacity:.9;border-radius:0.4px"></div>
<div class="t" style="left:305.9px;top:298.93px;font-size:8.60px;color:#2a2a2a;transform:scale(0.5);transform-origin:0 0">Steady-State Thermal</div>
<div class="a" style="left:298.9px;top:304.20px;width:5.8px;height:5.4px;background:#3f9e3e;border-radius:1.1px"></div>
<div class="a" style="left:300.2px;top:305.40px;width:3.2px;height:3px;background:#c0e0b0;opacity:.9;border-radius:0.4px"></div>
<div class="t" style="left:305.9px;top:305.25px;font-size:8.60px;color:#2a2a2a;transform:scale(0.5);transform-origin:0 0">Structural Optimization</div>
<div class="a" style="left:298.9px;top:310.52px;width:5.8px;height:5.4px;background:#8a8a8a;border-radius:1.1px"></div>
<div class="a" style="left:300.2px;top:311.72px;width:3.2px;height:3px;background:#d08040;opacity:.9;border-radius:0.4px"></div>
<div class="t" style="left:305.9px;top:311.57px;font-size:8.60px;color:#2a2a2a;transform:scale(0.5);transform-origin:0 0">Substructure Generation</div>
<div class="a" style="left:298.9px;top:316.84px;width:5.8px;height:5.4px;background:#c4702a;border-radius:1.1px"></div>
<div class="a" style="left:300.2px;top:318.04px;width:3.2px;height:3px;background:#e8b070;opacity:.9;border-radius:0.4px"></div>
<div class="t" style="left:305.9px;top:317.89px;font-size:8.60px;color:#2a2a2a;transform:scale(0.5);transform-origin:0 0">Thermal-Electric</div>
<div class="a" style="left:298.9px;top:323.16px;width:5.8px;height:5.4px;background:#4fae2e;border-radius:1.1px"></div>
<div class="a" style="left:300.2px;top:324.36px;width:3.2px;height:3px;background:#9ad870;opacity:.9;border-radius:0.4px"></div>
<div class="t" style="left:305.9px;top:324.21px;font-size:8.60px;color:#2a2a2a;transform:scale(0.5);transform-origin:0 0">Transient Structural</div>
<div class="a" style="left:298.9px;top:329.48px;width:5.8px;height:5.4px;background:#d2442a;border-radius:1.1px"></div>
<div class="a" style="left:300.2px;top:330.68px;width:3.2px;height:3px;background:#f0f0f0;opacity:.9;border-radius:0.4px"></div>
<div class="t" style="left:305.9px;top:330.53px;font-size:8.60px;color:#2a2a2a;transform:scale(0.5);transform-origin:0 0">Transient Thermal</div>
<div class="a" style="left:298.9px;top:335.80px;width:5.8px;height:5.4px;background:#2ea6a6;border-radius:1.1px"></div>
<div class="a" style="left:300.2px;top:337.00px;width:3.2px;height:3px;background:#bfe6e6;opacity:.9;border-radius:0.4px"></div>
<div class="t" style="left:305.9px;top:336.85px;font-size:8.60px;color:#2a2a2a;transform:scale(0.5);transform-origin:0 0">Turbomachinery Fluid Flow</div>
</div></div>
<div class="a" style="left:296.6px;top:342.7px;width:54.3px;height:7.1px;background:linear-gradient(#f8f8f8,#e4e4e4 40%,#c0c0c0);border:0.5px solid #b4b4b4;border-radius:0.6px"></div>
<div class="a" style="left:296.6px;top:350.2px;width:54.3px;height:7.1px;background:linear-gradient(#f8f8f8,#e4e4e4 40%,#c0c0c0);border:0.5px solid #b4b4b4;border-radius:0.6px"></div>
<div class="a" style="left:296.6px;top:357.7px;width:54.3px;height:6.9px;background:linear-gradient(#f8f8f8,#e4e4e4 40%,#c0c0c0);border:0.5px solid #b4b4b4;border-radius:0.6px"></div>
<div class="a" style="left:296.6px;top:364.8px;width:54.3px;height:7.1px;background:linear-gradient(#f8f8f8,#e4e4e4 40%,#c0c0c0);border:0.5px solid #b4b4b4;border-radius:0.6px"></div>
<div class="a" style="left:298.3px;top:344.5px;width:3.3px;height:3.3px;border:0.5px solid #7a7a7a;background:#d4d4d4"></div>
<div class="a" style="left:298.3px;top:352px;width:3.3px;height:3.3px;border:0.5px solid #7a7a7a;background:#d4d4d4"></div>
<div class="a" style="left:298.3px;top:359.4px;width:3.3px;height:3.3px;border:0.5px solid #7a7a7a;background:#d4d4d4"></div>
<div class="a" style="left:298.3px;top:366.6px;width:3.3px;height:3.3px;border:0.5px solid #7a7a7a;background:#d4d4d4"></div>
<div class="t" style="left:303.2px;top:344.9px;font-size:8.60px;color:#303030;transform:scale(0.5);transform-origin:0 0">Component Systems</div>
<div class="t" style="left:303.2px;top:352.4px;font-size:8.60px;color:#303030;transform:scale(0.5);transform-origin:0 0">Custom Systems</div>
<div class="t" style="left:303.2px;top:359.8px;font-size:8.60px;color:#303030;transform:scale(0.5);transform-origin:0 0">Design Exploration</div>
<div class="t" style="left:303.2px;top:367px;font-size:8.60px;color:#303030;transform:scale(0.5);transform-origin:0 0">ACT</div>
<div class="a" style="left:295.5px;top:408.7px;width:57px;height:9px;background:#eeeeee"></div>
<svg class="a" style="left:296px;top:408.5px" width="6" height="6"><path d="M0.5 0.6h4.8l-1.8 2.2v2.6l-1.2-0.6v-2z" fill="#3a7ad8"/></svg>
<div class="t" style="left:308.1px;top:411.2px;font-size:8.60px;color:#4040d8;transform:scale(0.5);transform-origin:0 0">View All / Customize...</div>
<div class="a" style="left:352.4px;top:131.4px;width:1.2px;height:286.5px;background:#b4b4b4"></div>

<!-- project schematic -->
<div class="a" style="left:353.3px;top:131.5px;width:549.5px;height:6.4px;background:linear-gradient(90deg,#0b1a8c 0%,#1e2f9a 22%,#5c7ac0 55%,#a9d2ea 100%)"></div>
<div class="t" style="left:354.5px;top:133.1px;font-size:9.4px;color:#e6e8f4;transform:scale(0.5);transform-origin:0 0">Project Schematic</div>
<svg class="a" style="left:884px;top:131.5px" width="19" height="6.3">
  <path d="M1.2 2.4h2.8l-1.4 1.6z" fill="#1a2a80"/>
  <path d="M8.2 1.4v2.6M7.3 2.2h1.8M8.2 4v1.4" stroke="#303030" stroke-width="0.6"/>
  <path d="M13.6 1.8l2.4 2.6M16 1.8l-2.4 2.6" stroke="#303030" stroke-width="0.7"/>
</svg>
<div class="a" style="left:353.8px;top:137.9px;width:549px;height:162px;background:#ffffff"></div>

<!-- messages -->
<div class="a" style="left:353.4px;top:299.9px;width:549.2px;height:6.3px;background:linear-gradient(#848484,#a6a6a6)"></div>
<div class="t" style="left:354.6px;top:301.6px;font-size:7.60px;color:#dcdcdc;transform:scale(0.5);transform-origin:0 0">Messages</div>
<svg class="a" style="left:884px;top:299.9px" width="19" height="6.3">
  <path d="M1.2 2.4h2.8l-1.4 1.6z" fill="#1a2a80"/>
  <path d="M9 1.4v2.6M8.1 2.2h1.8M9 4v1.4" stroke="#303030" stroke-width="0.6"/>
  <path d="M14.2 1.8l2.4 2.6M16.6 1.8l-2.4 2.6" stroke="#303030" stroke-width="0.7"/>
</svg>
<div class="a" style="left:353.8px;top:306.2px;width:549px;height:111.6px;background:#efefef"></div>
<div class="a" style="left:353.8px;top:306.7px;width:548.8px;height:8.5px;background:#e6e6e6;border-bottom:0.6px solid #a8a8a8"></div>
<div class="a" style="left:353.8px;top:315.4px;width:15.2px;height:7.3px;background:#e6e6e6;border-bottom:0.6px solid #a8a8a8"></div>
<div class="a" style="left:369.7px;top:315.4px;width:532.9px;height:7.3px;background:#a8c8f0;border-bottom:0.5px solid #90a8c8"></div>
<div class="a" style="left:369px;top:306.7px;width:0.7px;height:16px;background:#a0a0a0"></div>
<div class="a" style="left:381.5px;top:306.7px;width:1.1px;height:16px;background:#c4c4c4"></div>
<div class="a" style="left:807px;top:306.7px;width:0.6px;height:16px;background:#a0a0a0"></div>
<div class="a" style="left:877.3px;top:306.7px;width:0.6px;height:16px;background:#a0a0a0"></div>
<div class="a" style="left:353.4px;top:306.2px;width:0.6px;height:16.5px;background:#909090"></div>
<div class="t" style="left:373.8px;top:309.2px;font-size:8.00px;color:#303030;transform:scale(0.5);transform-origin:0 0">A</div>
<div class="t" style="left:592.5px;top:309.2px;font-size:8.00px;color:#303030;transform:scale(0.5);transform-origin:0 0">B</div>
<div class="t" style="left:840.5px;top:309.2px;font-size:8.00px;color:#303030;transform:scale(0.5);transform-origin:0 0">C</div>
<div class="t" style="left:888px;top:309.2px;font-size:8.00px;color:#303030;transform:scale(0.5);transform-origin:0 0">D</div>
<div class="t" style="left:360.2px;top:317.4px;font-size:8.00px;color:#303030;transform:scale(0.5);transform-origin:0 0">1</div>
<div class="t" style="left:371.6px;top:317.2px;font-size:8.40px;color:#1a2a60;transform:scale(0.5);transform-origin:0 0">Type</div>
<div class="t" style="left:590px;top:317.2px;font-size:8.40px;color:#1a2a60;transform:scale(0.5);transform-origin:0 0">Text</div>
<div class="t" style="left:830px;top:317.2px;font-size:8.00px;color:#1a2a60;transform:scale(0.5);transform-origin:0 0">Association</div>
<div class="t" style="left:878.8px;top:317.2px;font-size:8.00px;color:#1a2a60;transform:scale(0.5);transform-origin:0 0">Date/Time</div>

<!-- status bar -->
<div class="a" style="left:295px;top:418.6px;width:608px;height:0.7px;background:#c0c0c0"></div>
<div class="a" style="left:295px;top:419.3px;width:608px;height:9px;background:#ececec"></div>
<div class="a" style="left:295px;top:428.2px;width:608px;height:2.2px;background:#f8f8f8"></div>
<svg class="a" style="left:298px;top:420px" width="6" height="8">
  <circle cx="2.4" cy="1.6" r="1.1" fill="none" stroke="#909090" stroke-width="0.5"/>
  <circle cx="2.4" cy="5.3" r="1.6" fill="#18c018"/>
</svg>
<div class="t" style="left:305px;top:421.8px;font-size:8.40px;color:#2a2a2a;transform:scale(0.5);transform-origin:0 0">Ready</div>
<div class="a" style="left:696.5px;top:420.4px;width:80.5px;height:7.2px;background:#e2e2e2;border:0.5px solid #cfcfcf"></div>
<div class="a" style="left:778.3px;top:420.4px;width:33px;height:7.2px;background:#e2e2e2;border:0.5px solid #cfcfcf"></div>
<div class="a" style="left:812.7px;top:420.4px;width:37px;height:7.2px;background:#e2e2e2;border:0.5px solid #cfcfcf"></div>
<div class="a" style="left:850.3px;top:420.4px;width:40.5px;height:7.2px;background:#e4e4e4;border:0.5px solid #cfcfcf"></div>
<svg class="a" style="left:696px;top:420px" width="196" height="8">
  <rect x="1.5" y="1.2" width="5" height="3.8" fill="#2a9ab0"/><rect x="2.2" y="1.8" width="3.6" height="2.5" fill="#6ad0e0"/><rect x="3" y="5" width="2" height="1.4" fill="#404040"/>
  <rect x="83.6" y="1.2" width="5" height="5.2" fill="#90a8b0" stroke="#507080" stroke-width="0.4"/><path d="M84.3 5l1.4-2 1.2 1.2 1.2-1.8" stroke="#204050" stroke-width="0.4" fill="none"/>
  <rect x="119" y="3" width="5" height="2" fill="#60d060" stroke="#a0a0a0" stroke-width="0.3"/>
  <path d="M156 3l2.5-1.5 2.5 1.5v3h-5z" fill="#e8c838"/><path d="M156.5 5.5l4-2" stroke="#b09020" stroke-width="0.4"/>
</svg>
<div class="t" style="left:704px;top:422px;font-size:8.40px;color:#2a2a2a;transform:scale(0.5);transform-origin:0 0">No HPC Platform Services Connection</div>
<div class="t" style="left:786px;top:422px;font-size:8.40px;color:#2a2a2a;transform:scale(0.5);transform-origin:0 0">Job Monitor...</div>
<div class="t" style="left:821px;top:422px;font-size:8.40px;color:#2a2a2a;transform:scale(0.5);transform-origin:0 0">Show Progress</div>
<div class="t" style="left:858.5px;top:422px;font-size:8.40px;color:#2a2a2a;transform:scale(0.5);transform-origin:0 0">Hide 0 Messages</div>


<!-- ============ dock ============ -->
<!-- dock -->
<div class="a" style="left:446.6px;top:509px;width:106.8px;height:15.6px;background:#2b3036"></div>
<svg class="a" style="left:446px;top:509px" width="108" height="16" viewBox="446 509 108 16">
  <rect x="448" y="510" width="14.3" height="8.6" fill="#12a4dc"/>
  <rect x="448" y="518.6" width="14.3" height="4.8" fill="#4e6070"/>
  <rect x="464.1" y="510.6" width="1.3" height="12.5" fill="#666b70"/>
  <rect x="468" y="510.2" width="14" height="13" fill="#d8dde0"/>
  <rect x="468.7" y="510.9" width="12.6" height="11.6" fill="#263441"/>
  <path d="M470.2 512.4l1 0.8-1 0.8M471.6 514.4h1.6" stroke="#d0d0d0" stroke-width="0.5" fill="none"/>
  <rect x="486" y="510.2" width="11" height="13" rx="0.8" fill="#14a8e0"/>
  <path d="M486 516.8h11" stroke="#0a80b0" stroke-width="0.5"/>
  <rect x="490.2" y="512.8" width="2.6" height="0.8" fill="#6acbee"/><rect x="490.2" y="519.2" width="2.6" height="0.8" fill="#6acbee"/>
  <circle cx="508.4" cy="516.6" r="7.8" fill="#16a4dc"/>
  <path d="M503 512.5c2 1 3 0 4.5 1.2s-0.5 2.2 1 3.2 2.5 0 3 2M510 510c1 1 0 2 1.5 2.6" stroke="#c6ecf8" stroke-width="0.8" fill="none"/>
  <path d="M502.6 516.3l0 7.2 1.6-1.6 1.3 2.4 1-0.5-1.2-2.3 2.2-0.2z" fill="#ffffff"/>
  <rect x="518.6" y="510.2" width="13.4" height="13" fill="#bde4f4"/>
  <circle cx="524.2" cy="515.6" r="3.5" fill="#9ad6f0" stroke="#1a2a38" stroke-width="0.9"/>
  <path d="M526.8 518.2l3 3" stroke="#1a2a38" stroke-width="1.3"/>
  <rect x="534.2" y="510.6" width="1.3" height="12.5" fill="#666b70"/>
  <path d="M538 511.2h4.8l1.2 1.5h8v10.8h-14z" fill="#cdbfae"/>
  <rect x="538" y="513.2" width="14" height="10.3" fill="#e0d6c8"/>
</svg>

<div class="a" style="left:0;top:524.5px;width:1000px;height:3px;background:#262626"></div>
</body></html>
